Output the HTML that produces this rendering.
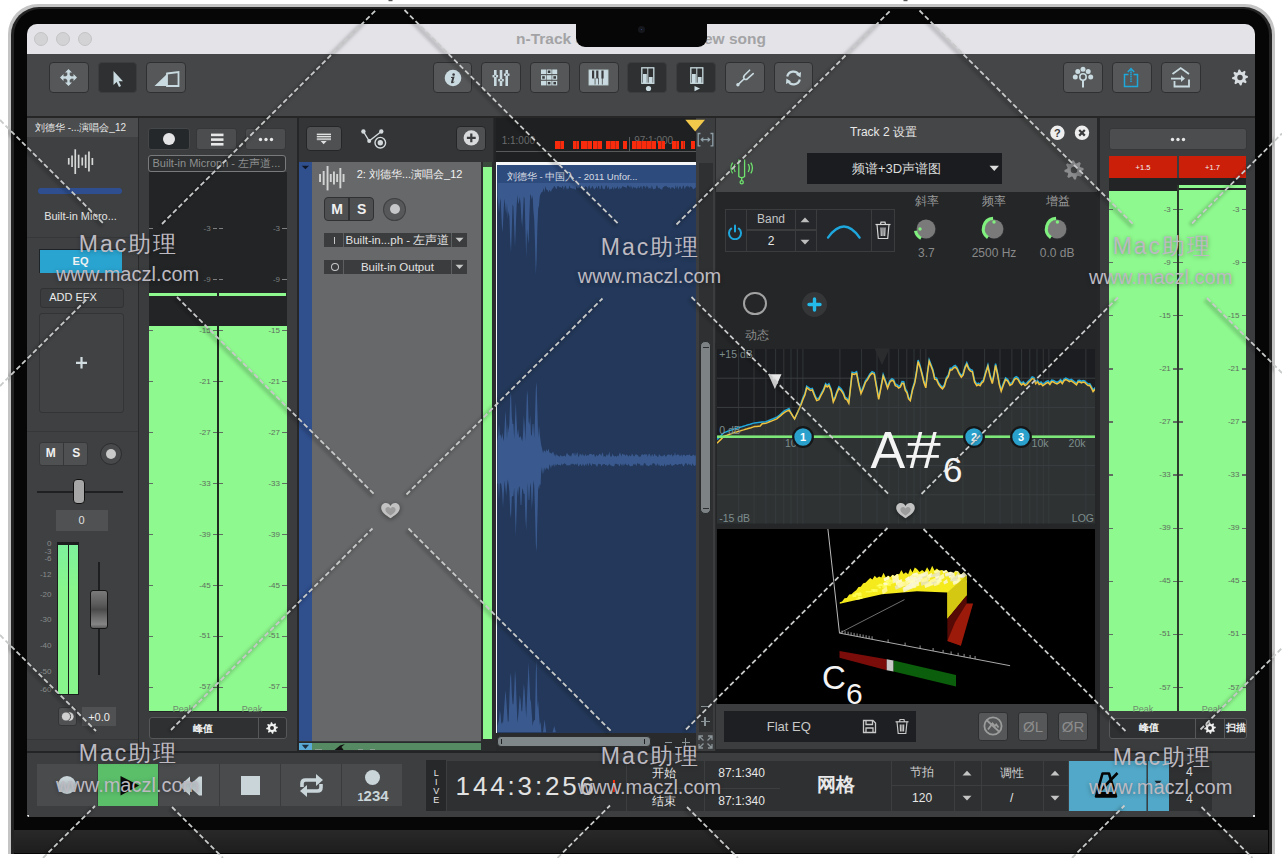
<!DOCTYPE html><html><head><meta charset="utf-8"><style>
*{margin:0;padding:0;box-sizing:border-box}
html,body{width:1282px;height:858px;overflow:hidden;background:#fff}
body{position:relative;font-family:"Liberation Sans",sans-serif}
div{position:absolute}
.t{white-space:nowrap;overflow:visible}
</style></head><body><div style="left:7.5px;top:4px;width:1267.2px;height:849.5px;background:#c4c4c4;border-radius:30px 30px 0 0;"></div>
<div style="left:10.5px;top:6.5px;width:1261.2px;height:847.0px;background:#242424;border-radius:28px 28px 0 0;"></div>
<div style="left:13.5px;top:8.5px;width:1255.0px;height:845.0px;background:#060606;border-radius:26px 26px 0 0;"></div>
<div style="left:14.4px;top:830.2px;width:1253.8999999999999px;height:23.0px;background:linear-gradient(#292929,#1d1d1d);"></div>
<div style="left:27px;top:24px;width:1228px;height:793px;background:#3d3e40;border-radius:10px 10px 3px 3px;overflow:hidden;"></div>
<div style="left:27px;top:24px;width:1228px;height:30px;background:#e4e3e8;border-radius:10px 10px 0 0;"></div>
<div style="left:34px;top:31.5px;width:14px;height:14.0px;background:#d3d3d5;border:1px solid #c4c4c6;border-radius:50%;"></div>
<div style="left:56px;top:31.5px;width:14px;height:14.0px;background:#d3d3d5;border:1px solid #c4c4c6;border-radius:50%;"></div>
<div style="left:78px;top:31.5px;width:14px;height:14.0px;background:#d3d3d5;border:1px solid #c4c4c6;border-radius:50%;"></div>
<div class="t" style="left:516.0px;top:22.8px;width:120px;height:31.0px;line-height:31.0px;font-size:15.5px;color:#a3a3a5;text-align:left;font-weight:bold;">n-Track S</div>
<div class="t" style="left:646.0px;top:22.8px;width:120px;height:31.0px;line-height:31.0px;font-size:15.5px;color:#a3a3a5;text-align:right;font-weight:bold;">ew song</div>
<div style="left:576px;top:20px;width:131px;height:27px;background:#060606;border-radius:0 0 9px 9px;"></div>
<div style="left:637.8px;top:25.8px;width:7.0px;height:6.9999999999999964px;background:#15171c;border-radius:50%;"></div>
<div style="left:640.6px;top:28.6px;width:1.3999999999999773px;height:1.3999999999999986px;background:#2a4a8a;border-radius:50%;"></div>
<div style="left:27px;top:54px;width:1228px;height:62px;background:#454648;"></div>
<div style="left:27px;top:116px;width:1228px;height:2px;background:#262626;"></div>
<div style="left:48.5px;top:62px;width:40.0px;height:30.5px;background:#565758;border:1px solid #2f3031;border-radius:4px;"></div>
<div style="left:97.5px;top:62px;width:39.5px;height:30.5px;background:#2f3031;border:1px solid #3c3d3e;border-radius:4px;"></div>
<div style="left:146px;top:62px;width:39.5px;height:30.5px;background:#565758;border:1px solid #2f3031;border-radius:4px;"></div>
<svg style="position:absolute;left:58px;top:67px;" width="21" height="21" viewBox="0 0 21 21"><g fill="#c9dbe0"><circle cx="10.5" cy="10.5" r="2.6"/><path d="M10.5 2 L14 5.5 L7 5.5Z M10.5 19 L14 15.5 L7 15.5Z M2 10.5 L5.5 7 L5.5 14Z M19 10.5 L15.5 7 L15.5 14Z"/><rect x="9.3" y="4" width="2.4" height="13"/><rect x="4" y="9.3" width="13" height="2.4"/></g></svg>
<svg style="position:absolute;left:110px;top:69px;" width="14" height="19" viewBox="0 0 14 19"><path d="M3.5 2 L3.5 16 L6.6 13 L9 18 L11 17 L8.7 12.2 L13 12.2Z" fill="#c9dbe0"/></svg>
<svg style="position:absolute;left:153px;top:70px;" width="28" height="18" viewBox="0 0 28 18"><path d="M1.5 16 L14 4 L14 16Z" fill="#c9dbe0"/><path d="M14 3.5 L25.5 2 L25.5 16 L14 16Z" fill="none" stroke="#c9dbe0" stroke-width="1.8"/></svg>
<div style="left:432.5px;top:62px;width:39.0px;height:30.5px;background:#565758;border:1px solid #2f3031;border-radius:4px;"></div>
<div style="left:481px;top:62px;width:39.5px;height:30.5px;background:#565758;border:1px solid #2f3031;border-radius:4px;"></div>
<div style="left:530px;top:62px;width:39.5px;height:30.5px;background:#565758;border:1px solid #2f3031;border-radius:4px;"></div>
<div style="left:579px;top:62px;width:39.5px;height:30.5px;background:#565758;border:1px solid #2f3031;border-radius:4px;"></div>
<div style="left:627px;top:62px;width:39.5px;height:30.5px;background:#2f3031;border:1px solid #3c3d3e;border-radius:4px;"></div>
<div style="left:676px;top:62px;width:39.5px;height:30.5px;background:#2f3031;border:1px solid #3c3d3e;border-radius:4px;"></div>
<div style="left:724.5px;top:62px;width:40.0px;height:30.5px;background:#565758;border:1px solid #2f3031;border-radius:4px;"></div>
<div style="left:773.5px;top:62px;width:39.5px;height:30.5px;background:#565758;border:1px solid #2f3031;border-radius:4px;"></div>
<svg style="position:absolute;left:444px;top:69px;" width="18" height="18" viewBox="0 0 18 18"><circle cx="9" cy="9" r="8.3" fill="#c9dbe0"/><path d="M9.6 4.2a1.3 1.3 0 1 0 .01 0Z" fill="#3a3b3c"/><path d="M7 8 L10.6 7.6 L9.2 12.6 Q9 13.4 10.3 12.6 L10.5 13 Q8.5 14.8 7.4 14.2 Q6.8 13.8 7.2 12.6 L8.2 9 L7 9Z" fill="#3a3b3c"/></svg>
<svg style="position:absolute;left:491px;top:68px;" width="20" height="20" viewBox="0 0 20 20"><g fill="#c9dbe0"><rect x="3" y="2" width="2.6" height="16"/><rect x="8.7" y="2" width="2.6" height="16"/><rect x="14.4" y="2" width="2.6" height="16"/><rect x="1.5" y="7" width="5.6" height="2.4"/><rect x="7.2" y="11" width="5.6" height="2.4"/><rect x="12.9" y="5.5" width="5.6" height="2.4"/></g><g fill="#565758"><rect x="3.6" y="7.4" width="1.4" height="1.6"/><rect x="9.3" y="11.4" width="1.4" height="1.6"/><rect x="15" y="5.9" width="1.4" height="1.6"/></g></svg>
<svg style="position:absolute;left:540px;top:69px;" width="18" height="18" viewBox="0 0 18 18"><g fill="#c9dbe0"><rect x="1" y="0.5" width="5" height="4.5"/><rect x="6.6" y="0.5" width="5" height="4.5"/><rect x="12.2" y="0.5" width="5" height="4.5"/><rect x="1" y="6.2" width="5" height="4.5"/><rect x="6.6" y="6.2" width="5" height="4.5"/><rect x="12.2" y="6.2" width="5" height="4.5"/><rect x="1" y="11.9" width="5" height="4.5"/><rect x="6.6" y="11.9" width="5" height="4.5"/><rect x="12.2" y="11.9" width="5" height="4.5"/></g><g fill="#3a3b3c"><rect x="7.8" y="1.5" width="2.6" height="2.5"/><rect x="2.2" y="7.2" width="2.6" height="2.5"/><rect x="13.4" y="7.2" width="2.6" height="2.5"/><rect x="7.8" y="12.9" width="2.6" height="2.5"/><rect x="13.4" y="12.9" width="2.6" height="2.5"/></g></svg>
<svg style="position:absolute;left:588px;top:69px;" width="21" height="17" viewBox="0 0 21 17"><rect x="0.8" y="0.8" width="19.4" height="15.4" fill="#c9dbe0" stroke="#9aa" stroke-width="0.6"/><g fill="#3a3b3c"><rect x="4" y="1.5" width="2.2" height="8"/><rect x="8.2" y="1.5" width="2.2" height="8"/><rect x="13.4" y="1.5" width="2.2" height="8"/><rect x="6.7" y="9" width="0.7" height="6.5"/><rect x="10.3" y="9" width="0.7" height="6.5"/><rect x="13.9" y="9" width="0.7" height="6.5"/></g></svg>
<svg style="position:absolute;left:641px;top:67px;" width="14" height="18" viewBox="0 0 14 18"><rect x="0.8" y="0.8" width="12" height="15.5" fill="#2f3031" stroke="#c9dbe0" stroke-width="1.3"/><line x1="6.8" y1="1" x2="6.8" y2="16" stroke="#c9dbe0" stroke-width="1"/><rect x="2" y="7" width="3.8" height="9" fill="#c9dbe0"/><rect x="7.8" y="10" width="3.8" height="6" fill="#c9dbe0"/></svg>
<svg style="position:absolute;left:645px;top:85px;" width="7" height="7" viewBox="0 0 7 7"><circle cx="3.5" cy="3.5" r="2.6" fill="#c9dbe0"/></svg>
<svg style="position:absolute;left:690px;top:67px;" width="14" height="18" viewBox="0 0 14 18"><rect x="0.8" y="0.8" width="12" height="15.5" fill="#2f3031" stroke="#c9dbe0" stroke-width="1.3"/><line x1="6.8" y1="1" x2="6.8" y2="16" stroke="#c9dbe0" stroke-width="1"/><rect x="2" y="7" width="3.8" height="9" fill="#c9dbe0"/><rect x="7.8" y="10" width="3.8" height="6" fill="#c9dbe0"/></svg>
<svg style="position:absolute;left:693px;top:85px;" width="8" height="7" viewBox="0 0 8 7"><path d="M1.5 1 L7 3.6 L1.5 6.2Z" fill="#c9dbe0"/></svg>
<svg style="position:absolute;left:735px;top:69px;" width="22" height="19" viewBox="0 0 22 19"><g fill="none" stroke="#c9dbe0" stroke-width="1.6" stroke-linecap="round"><path d="M3 15.6 L9 10"/><path d="M14.6 1.2 L9.5 6.2 Q7.8 8.3 9.3 9.8 Q10.9 11.3 12.6 9.6 L18.2 4.6"/></g><circle cx="2.9" cy="15.8" r="1.7" fill="#c9dbe0"/></svg>
<svg style="position:absolute;left:784px;top:69px;" width="19" height="18" viewBox="0 0 19 18"><g fill="none" stroke="#c9dbe0" stroke-width="2.2"><path d="M3.2 7.5 A6.3 6.3 0 0 1 15 6.2"/><path d="M15.8 10.5 A6.3 6.3 0 0 1 4 11.8"/></g><path d="M12 5.5 L17 3 L16.6 8.6Z M7 12.5 L2 15 L2.4 9.4Z" fill="#c9dbe0"/></svg>
<div style="left:1062.5px;top:62px;width:40.0px;height:30.5px;background:#565758;border:1px solid #2f3031;border-radius:4px;"></div>
<div style="left:1111.5px;top:62px;width:40.0px;height:30.5px;background:#565758;border:1px solid #2f3031;border-radius:4px;"></div>
<div style="left:1160.5px;top:62px;width:40.0px;height:30.5px;background:#565758;border:1px solid #2f3031;border-radius:4px;"></div>
<svg style="position:absolute;left:1072px;top:66px;" width="22" height="23" viewBox="0 0 22 23"><g fill="#c9dbe0"><circle cx="11" cy="3.2" r="2.5"/><circle cx="5.8" cy="5.5" r="2.5"/><circle cx="16.2" cy="5.5" r="2.5"/><circle cx="3.3" cy="11" r="2.5"/><circle cx="18.7" cy="11" r="2.5"/><rect x="10" y="14" width="2" height="7.5"/></g><circle cx="11" cy="11" r="3.2" fill="none" stroke="#c9dbe0" stroke-width="1.6"/></svg>
<svg style="position:absolute;left:1121px;top:66px;" width="20" height="23" viewBox="0 0 20 23"><g fill="none" stroke="#1ea7d9" stroke-width="1.5"><path d="M7.5 8.5 L3.5 8.5 L3.5 20.5 L16.5 20.5 L16.5 8.5 L12.5 8.5"/><path d="M10 16 L10 3" stroke-dasharray="1.6 0.6"/><path d="M6.8 6 L10 2.5 L13.2 6"/></g></svg>
<svg style="position:absolute;left:1169px;top:66px;" width="24" height="23" viewBox="0 0 24 23"><g fill="none" stroke="#c9dbe0" stroke-width="1.8"><path d="M3.5 8 L11.7 2 L20 8"/><path d="M5.5 15 L5.5 20.5 L20 20.5 L20 13.5"/><path d="M2 12.6 L14 12.6"/></g><path d="M12 9.2 L16 12.6 L12 16Z" fill="#c9dbe0"/></svg>
<svg style="position:absolute;left:1230px;top:67px;" width="20" height="21" viewBox="0 0 20 21"><polygon points="17.84,8.91 18.00,10.47 15.65,11.60 15.33,12.68 16.67,14.92 15.68,16.14 13.22,15.28 12.22,15.81 11.59,18.34 10.03,18.50 8.90,16.15 7.82,15.83 5.58,17.17 4.36,16.18 5.22,13.72 4.69,12.72 2.16,12.09 2.00,10.53 4.35,9.40 4.67,8.32 3.33,6.08 4.32,4.86 6.78,5.72 7.78,5.19 8.41,2.66 9.97,2.50 11.10,4.85 12.18,5.17 14.42,3.83 15.64,4.82 14.78,7.28 15.31,8.28" fill="#d7dde0"/><circle cx="10" cy="10.5" r="2.72" fill="#454648"/></svg>
<div style="left:27px;top:118px;width:1228px;height:634px;background:#292a2b;"></div>
<div style="left:27px;top:118px;width:110.5px;height:633px;background:#3e4041;"></div>
<div style="left:27px;top:118px;width:110.5px;height:19px;background:#4a4c4d;"></div>
<div class="t" style="left:25.5px;top:117.8px;width:110px;height:20px;line-height:20px;font-size:10px;color:#e6e6e6;text-align:center;font-weight:normal;">刘德华 -...演唱会_12</div>
<svg style="position:absolute;left:60px;top:145px;" width="40" height="35" viewBox="0 0 40 35"><g fill="#d6d8d8"><rect x="7.9" y="13" width="1.7" height="6.599999999999994"/><rect x="11.2" y="10.5" width="1.7" height="11.5"/><rect x="14.4" y="4.300000000000011" width="1.7" height="24.69999999999999"/><rect x="17.8" y="9.699999999999989" width="1.7" height="13.300000000000011"/><rect x="21.4" y="12.5" width="1.7" height="8.0"/><rect x="24.8" y="9.699999999999989" width="1.7" height="13.300000000000011"/><rect x="28.1" y="6.5" width="1.7" height="20.0"/><rect x="31.5" y="13" width="1.7" height="7"/></g></svg>
<div style="left:38.3px;top:187.8px;width:84.2px;height:6.399999999999977px;background:#2e4e90;border-radius:3px;"></div>
<div class="t" style="left:25.5px;top:204.5px;width:110px;height:22px;line-height:22px;font-size:11px;color:#e4e4e4;text-align:center;font-weight:normal;">Built-in Micro...</div>
<div style="left:27px;top:236.5px;width:110.5px;height:1.0px;background:#353738;"></div>
<div style="left:38.5px;top:249px;width:83.5px;height:24px;background:#29a4d0;border-top:1px solid #1d2326;border-left:1px solid #1d2326;"></div>
<div class="t" style="left:50.5px;top:249.8px;width:60px;height:22px;line-height:22px;font-size:11px;color:#f2f2f2;text-align:center;font-weight:bold;">EQ</div>
<div style="left:39.5px;top:287.5px;width:84.0px;height:20.0px;background:#3b3d3e;border:1px solid #303233;border-radius:3px;"></div>
<div class="t" style="left:33.0px;top:286.4px;width:80px;height:22px;line-height:22px;font-size:11px;color:#ececec;text-align:center;font-weight:normal;">ADD EFX</div>
<div style="left:39px;top:313px;width:85px;height:99.5px;background:#404243;border:1px solid #323435;border-radius:3px;"></div>
<svg style="position:absolute;left:75px;top:356px;" width="13" height="14" viewBox="0 0 13 14"><path d="M6.5 1 V12.5 M1 6.8 H12" stroke="#d2dde2" stroke-width="2.2"/></svg>
<div style="left:27px;top:430.5px;width:110.5px;height:1.0px;background:#353738;"></div>
<div style="left:38.8px;top:441.8px;width:49.5px;height:23.80000000000001px;background:#4e5051;border:1px solid #353738;border-radius:3px;"></div>
<div style="left:63px;top:442px;width:1.2000000000000028px;height:23px;background:#353738;"></div>
<div class="t" style="left:40.8px;top:441.0px;width:20px;height:24px;line-height:24px;font-size:12px;color:#f0f0f0;text-align:center;font-weight:bold;">M</div>
<div class="t" style="left:66.3px;top:441.0px;width:20px;height:24px;line-height:24px;font-size:12px;color:#f0f0f0;text-align:center;font-weight:bold;">S</div>
<div style="left:99.7px;top:442.8px;width:22.599999999999994px;height:22.599999999999966px;background:#47494a;border:1.5px solid #2b2d2e;border-radius:50%;"></div>
<div style="left:106px;top:449px;width:10px;height:10px;background:#c9c9c9;border-radius:50%;"></div>
<div style="left:37px;top:491.2px;width:86px;height:1.8000000000000114px;background:#1f2021;"></div>
<div style="left:73.2px;top:479.4px;width:12.099999999999994px;height:25.0px;background:#a6a6a6;border:1.5px solid #101010;border-radius:4px;"></div>
<div style="left:55.5px;top:509.7px;width:52.0px;height:20.900000000000034px;background:#505152;"></div>
<div class="t" style="left:66.5px;top:509.2px;width:30px;height:22px;line-height:22px;font-size:11px;color:#e0e0e0;text-align:center;font-weight:normal;">0</div>
<div style="left:57px;top:542px;width:21.599999999999994px;height:152.5px;background:#1c1d1e;"></div>
<div style="left:57.8px;top:545px;width:10.0px;height:149px;background:linear-gradient(#7ef29c,#88f58c 30%,#88f58c);"></div>
<div style="left:69px;top:545px;width:9px;height:149px;background:linear-gradient(#7ef29c,#88f58c 30%,#88f58c);"></div>
<div class="t" style="left:21.5px;top:535.7px;width:30px;height:16px;line-height:16px;font-size:8px;color:#8a8c8d;text-align:right;font-weight:normal;">0</div>
<div class="t" style="left:21.5px;top:543.7px;width:30px;height:16px;line-height:16px;font-size:8px;color:#8a8c8d;text-align:right;font-weight:normal;">-3</div>
<div class="t" style="left:21.5px;top:551.4px;width:30px;height:16px;line-height:16px;font-size:8px;color:#8a8c8d;text-align:right;font-weight:normal;">-6</div>
<div class="t" style="left:21.5px;top:567.4px;width:30px;height:16px;line-height:16px;font-size:8px;color:#8a8c8d;text-align:right;font-weight:normal;">-12</div>
<div class="t" style="left:21.5px;top:586.9px;width:30px;height:16px;line-height:16px;font-size:8px;color:#8a8c8d;text-align:right;font-weight:normal;">-20</div>
<div class="t" style="left:21.5px;top:612.3px;width:30px;height:16px;line-height:16px;font-size:8px;color:#8a8c8d;text-align:right;font-weight:normal;">-30</div>
<div class="t" style="left:21.5px;top:637.9px;width:30px;height:16px;line-height:16px;font-size:8px;color:#8a8c8d;text-align:right;font-weight:normal;">-40</div>
<div class="t" style="left:21.5px;top:663.5px;width:30px;height:16px;line-height:16px;font-size:8px;color:#8a8c8d;text-align:right;font-weight:normal;">-50</div>
<div class="t" style="left:21.5px;top:682.0px;width:30px;height:16px;line-height:16px;font-size:8px;color:#8a8c8d;text-align:right;font-weight:normal;">-60</div>
<div style="left:97.8px;top:562px;width:2.0px;height:112.70000000000005px;background:#1d1e1f;"></div>
<div style="left:90.2px;top:590.1px;width:18.200000000000003px;height:39.10000000000002px;background:linear-gradient(#7a7a7a,#5c5c5c 35%,#4a4a4a 50%,#6a6a6a 70%,#858585 90%,#5a5a5a);border:1.5px solid #151515;border-radius:3px;"></div>
<div style="left:58px;top:707px;width:19px;height:19.399999999999977px;background:#505152;border:1px solid #333536;border-radius:3px;"></div>
<svg style="position:absolute;left:60px;top:709px;" width="15" height="15" viewBox="0 0 15 15"><circle cx="9.5" cy="7.5" r="4.2" fill="#d8d8d8"/><circle cx="6" cy="7.5" r="4.6" fill="#d0d0d0" stroke="#505152" stroke-width="1"/></svg>
<div style="left:82px;top:707px;width:33.8px;height:19.399999999999977px;background:#505152;"></div>
<div class="t" style="left:79.0px;top:705.8px;width:40px;height:22px;line-height:22px;font-size:11px;color:#eeeeee;text-align:center;font-weight:normal;">+0.0</div>
<div style="left:27px;top:739px;width:110.5px;height:1px;background:#343637;"></div>
<div style="left:27px;top:740px;width:110.5px;height:11px;background:#3b3d3e;"></div>
<div style="left:139.2px;top:118px;width:157.8px;height:633px;background:#3a3c3d;"></div>
<div style="left:148.1px;top:127.8px;width:42.20000000000002px;height:22.60000000000001px;background:#25282a;border:1px solid #444647;border-radius:3px;"></div>
<div style="left:163.3px;top:133.2px;width:11.799999999999983px;height:11.800000000000011px;background:#e4e4e6;border-radius:50%;"></div>
<div style="left:196.1px;top:127.8px;width:41.400000000000006px;height:22.60000000000001px;background:#4b4d4e;border:1px solid #353738;border-radius:3px;"></div>
<svg style="position:absolute;left:210px;top:133px;" width="15" height="13" viewBox="0 0 15 13"><g fill="#e8e8e8"><rect x="1" y="0.6" width="12.5" height="2.6"/><rect x="1" y="5.3" width="12.5" height="2.6"/><rect x="1" y="10" width="12.5" height="2.6"/></g></svg>
<div style="left:245.3px;top:127.8px;width:41.0px;height:22.60000000000001px;background:#4b4d4e;border:1px solid #353738;border-radius:3px;"></div>
<svg style="position:absolute;left:256px;top:136px;" width="20" height="7" viewBox="0 0 20 7"><g fill="#e8e8e8"><circle cx="4.5" cy="3.5" r="1.7"/><circle cx="10" cy="3.5" r="1.7"/><circle cx="15.5" cy="3.5" r="1.7"/></g></svg>
<div style="left:147.8px;top:155.3px;width:138.7px;height:16.299999999999983px;background:#2e3031;border:1.5px solid #787a7b;border-radius:3px;"></div>
<div class="t" style="left:152.5px;top:152.4px;width:140px;height:22px;line-height:22px;font-size:11px;color:#8d8f90;text-align:left;font-weight:normal;overflow:hidden;width:132px;">Built-in Micropn - 左声道...</div>
<div style="left:148.5px;top:172px;width:138.0px;height:539.5px;background:#222425;"></div>
<div style="left:148.5px;top:325.6px;width:138.0px;height:385.9px;background:#8ef98e;"></div>
<div style="left:217.2px;top:325.6px;width:1.6000000000000227px;height:385.9px;background:#1f2a20;"></div>
<div style="left:148.5px;top:228.10000000000002px;width:4.5px;height:1.3999999999999773px;background:#7d7f80;"></div>
<div style="left:212.7px;top:228.10000000000002px;width:4.5px;height:1.3999999999999773px;background:#7d7f80;"></div>
<div class="t" style="left:180.7px;top:220.8px;width:30px;height:16px;line-height:16px;font-size:8px;color:#7d7f80;text-align:right;font-weight:normal;">-3</div>
<div style="left:218.8px;top:228.10000000000002px;width:4.5px;height:1.3999999999999773px;background:#7d7f80;"></div>
<div style="left:282.0px;top:228.10000000000002px;width:4.5px;height:1.3999999999999773px;background:#7d7f80;"></div>
<div class="t" style="left:250.0px;top:220.8px;width:30px;height:16px;line-height:16px;font-size:8px;color:#7d7f80;text-align:right;font-weight:normal;">-3</div>
<div style="left:148.5px;top:279.05px;width:4.5px;height:1.3999999999999773px;background:#7d7f80;"></div>
<div style="left:212.7px;top:279.05px;width:4.5px;height:1.3999999999999773px;background:#7d7f80;"></div>
<div class="t" style="left:180.7px;top:271.8px;width:30px;height:16px;line-height:16px;font-size:8px;color:#7d7f80;text-align:right;font-weight:normal;">-9</div>
<div style="left:218.8px;top:279.05px;width:4.5px;height:1.3999999999999773px;background:#7d7f80;"></div>
<div style="left:282.0px;top:279.05px;width:4.5px;height:1.3999999999999773px;background:#7d7f80;"></div>
<div class="t" style="left:250.0px;top:271.8px;width:30px;height:16px;line-height:16px;font-size:8px;color:#7d7f80;text-align:right;font-weight:normal;">-9</div>
<div style="left:148.5px;top:330.00000000000006px;width:4.5px;height:1.3999999999999773px;background:#5f6e60;"></div>
<div style="left:212.7px;top:330.00000000000006px;width:4.5px;height:1.3999999999999773px;background:#5f6e60;"></div>
<div class="t" style="left:180.7px;top:322.7px;width:30px;height:16px;line-height:16px;font-size:8px;color:#5f6e60;text-align:right;font-weight:normal;">-15</div>
<div style="left:218.8px;top:330.00000000000006px;width:4.5px;height:1.3999999999999773px;background:#5f6e60;"></div>
<div style="left:282.0px;top:330.00000000000006px;width:4.5px;height:1.3999999999999773px;background:#5f6e60;"></div>
<div class="t" style="left:250.0px;top:322.7px;width:30px;height:16px;line-height:16px;font-size:8px;color:#5f6e60;text-align:right;font-weight:normal;">-15</div>
<div style="left:148.5px;top:380.95000000000005px;width:4.5px;height:1.3999999999999773px;background:#5f6e60;"></div>
<div style="left:212.7px;top:380.95000000000005px;width:4.5px;height:1.3999999999999773px;background:#5f6e60;"></div>
<div class="t" style="left:180.7px;top:373.7px;width:30px;height:16px;line-height:16px;font-size:8px;color:#5f6e60;text-align:right;font-weight:normal;">-21</div>
<div style="left:218.8px;top:380.95000000000005px;width:4.5px;height:1.3999999999999773px;background:#5f6e60;"></div>
<div style="left:282.0px;top:380.95000000000005px;width:4.5px;height:1.3999999999999773px;background:#5f6e60;"></div>
<div class="t" style="left:250.0px;top:373.7px;width:30px;height:16px;line-height:16px;font-size:8px;color:#5f6e60;text-align:right;font-weight:normal;">-21</div>
<div style="left:148.5px;top:431.90000000000003px;width:4.5px;height:1.3999999999999773px;background:#5f6e60;"></div>
<div style="left:212.7px;top:431.90000000000003px;width:4.5px;height:1.3999999999999773px;background:#5f6e60;"></div>
<div class="t" style="left:180.7px;top:424.6px;width:30px;height:16px;line-height:16px;font-size:8px;color:#5f6e60;text-align:right;font-weight:normal;">-27</div>
<div style="left:218.8px;top:431.90000000000003px;width:4.5px;height:1.3999999999999773px;background:#5f6e60;"></div>
<div style="left:282.0px;top:431.90000000000003px;width:4.5px;height:1.3999999999999773px;background:#5f6e60;"></div>
<div class="t" style="left:250.0px;top:424.6px;width:30px;height:16px;line-height:16px;font-size:8px;color:#5f6e60;text-align:right;font-weight:normal;">-27</div>
<div style="left:148.5px;top:482.85px;width:4.5px;height:1.3999999999999773px;background:#5f6e60;"></div>
<div style="left:212.7px;top:482.85px;width:4.5px;height:1.3999999999999773px;background:#5f6e60;"></div>
<div class="t" style="left:180.7px;top:475.6px;width:30px;height:16px;line-height:16px;font-size:8px;color:#5f6e60;text-align:right;font-weight:normal;">-33</div>
<div style="left:218.8px;top:482.85px;width:4.5px;height:1.3999999999999773px;background:#5f6e60;"></div>
<div style="left:282.0px;top:482.85px;width:4.5px;height:1.3999999999999773px;background:#5f6e60;"></div>
<div class="t" style="left:250.0px;top:475.6px;width:30px;height:16px;line-height:16px;font-size:8px;color:#5f6e60;text-align:right;font-weight:normal;">-33</div>
<div style="left:148.5px;top:533.8px;width:4.5px;height:1.400000000000091px;background:#5f6e60;"></div>
<div style="left:212.7px;top:533.8px;width:4.5px;height:1.400000000000091px;background:#5f6e60;"></div>
<div class="t" style="left:180.7px;top:526.5px;width:30px;height:16px;line-height:16px;font-size:8px;color:#5f6e60;text-align:right;font-weight:normal;">-39</div>
<div style="left:218.8px;top:533.8px;width:4.5px;height:1.400000000000091px;background:#5f6e60;"></div>
<div style="left:282.0px;top:533.8px;width:4.5px;height:1.400000000000091px;background:#5f6e60;"></div>
<div class="t" style="left:250.0px;top:526.5px;width:30px;height:16px;line-height:16px;font-size:8px;color:#5f6e60;text-align:right;font-weight:normal;">-39</div>
<div style="left:148.5px;top:584.75px;width:4.5px;height:1.400000000000091px;background:#5f6e60;"></div>
<div style="left:212.7px;top:584.75px;width:4.5px;height:1.400000000000091px;background:#5f6e60;"></div>
<div class="t" style="left:180.7px;top:577.5px;width:30px;height:16px;line-height:16px;font-size:8px;color:#5f6e60;text-align:right;font-weight:normal;">-45</div>
<div style="left:218.8px;top:584.75px;width:4.5px;height:1.400000000000091px;background:#5f6e60;"></div>
<div style="left:282.0px;top:584.75px;width:4.5px;height:1.400000000000091px;background:#5f6e60;"></div>
<div class="t" style="left:250.0px;top:577.5px;width:30px;height:16px;line-height:16px;font-size:8px;color:#5f6e60;text-align:right;font-weight:normal;">-45</div>
<div style="left:148.5px;top:635.7px;width:4.5px;height:1.400000000000091px;background:#5f6e60;"></div>
<div style="left:212.7px;top:635.7px;width:4.5px;height:1.400000000000091px;background:#5f6e60;"></div>
<div class="t" style="left:180.7px;top:628.4px;width:30px;height:16px;line-height:16px;font-size:8px;color:#5f6e60;text-align:right;font-weight:normal;">-51</div>
<div style="left:218.8px;top:635.7px;width:4.5px;height:1.400000000000091px;background:#5f6e60;"></div>
<div style="left:282.0px;top:635.7px;width:4.5px;height:1.400000000000091px;background:#5f6e60;"></div>
<div class="t" style="left:250.0px;top:628.4px;width:30px;height:16px;line-height:16px;font-size:8px;color:#5f6e60;text-align:right;font-weight:normal;">-51</div>
<div style="left:148.5px;top:686.65px;width:4.5px;height:1.400000000000091px;background:#5f6e60;"></div>
<div style="left:212.7px;top:686.65px;width:4.5px;height:1.400000000000091px;background:#5f6e60;"></div>
<div class="t" style="left:180.7px;top:679.4px;width:30px;height:16px;line-height:16px;font-size:8px;color:#5f6e60;text-align:right;font-weight:normal;">-57</div>
<div style="left:218.8px;top:686.65px;width:4.5px;height:1.400000000000091px;background:#5f6e60;"></div>
<div style="left:282.0px;top:686.65px;width:4.5px;height:1.400000000000091px;background:#5f6e60;"></div>
<div class="t" style="left:250.0px;top:679.4px;width:30px;height:16px;line-height:16px;font-size:8px;color:#5f6e60;text-align:right;font-weight:normal;">-57</div>
<div style="left:148.5px;top:293.3px;width:68.69999999999999px;height:2.599999999999966px;background:#8ef98e;"></div>
<div style="left:218.8px;top:293.3px;width:67.69999999999999px;height:2.599999999999966px;background:#8ef98e;"></div>
<div class="t" style="left:163.0px;top:699.5px;width:40px;height:18px;line-height:18px;font-size:9px;color:#6f8a70;text-align:center;font-weight:normal;">Peak</div>
<div class="t" style="left:232.0px;top:699.5px;width:40px;height:18px;line-height:18px;font-size:9px;color:#6f8a70;text-align:center;font-weight:normal;">Peak</div>
<div style="left:148.5px;top:717.4px;width:138.0px;height:22.100000000000023px;background:#2e3031;border:1px solid #555758;border-radius:3px;"></div>
<div style="left:258px;top:717.4px;width:1.1999999999999886px;height:22.100000000000023px;background:#555758;"></div>
<div class="t" style="left:173.0px;top:718.5px;width:60px;height:20px;line-height:20px;font-size:10px;color:#f0f0f0;text-align:center;font-weight:bold;">峰值</div>
<svg style="position:absolute;left:265px;top:721px;" width="14" height="14" viewBox="0 0 14 14"><polygon points="12.68,5.85 12.80,6.98 11.10,7.80 10.86,8.58 11.83,10.20 11.12,11.09 9.33,10.46 8.61,10.85 8.15,12.68 7.02,12.80 6.20,11.10 5.42,10.86 3.80,11.83 2.91,11.12 3.54,9.33 3.15,8.61 1.32,8.15 1.20,7.02 2.90,6.20 3.14,5.42 2.17,3.80 2.88,2.91 4.67,3.54 5.39,3.15 5.85,1.32 6.98,1.20 7.80,2.90 8.58,3.14 10.20,2.17 11.09,2.88 10.46,4.67 10.85,5.39" fill="#f0f0f0"/><circle cx="7" cy="7" r="1.97" fill="#2e3031"/></svg>
<div style="left:297px;top:118px;width:2.3999999999999773px;height:633px;background:#252627;"></div>
<div style="left:299.4px;top:118px;width:194.10000000000002px;height:43.599999999999994px;background:#333537;"></div>
<div style="left:305.7px;top:125.9px;width:36.19999999999999px;height:25.299999999999983px;background:#4e5051;border:1.5px solid #252627;border-radius:4px;"></div>
<svg style="position:absolute;left:315px;top:131px;" width="19" height="18" viewBox="0 0 19 18"><g fill="#e0e2e2"><rect x="1.8" y="2.6" width="14.2" height="1.5"/><rect x="1.8" y="4.9" width="14.2" height="1.5"/><rect x="1.8" y="7.2" width="14.2" height="2" fill="#bfc1c1"/><path d="M5.6 10 L11.7 10 L8.65 13.2Z"/></g></svg>
<svg style="position:absolute;left:358px;top:126px;" width="32" height="24" viewBox="0 0 32 24"><g stroke="#d4dadc" stroke-width="1.4" fill="none"><path d="M5.4 5.5 L11.2 15 L23.3 5.5"/><circle cx="22.3" cy="16.7" r="5.3"/></g><g fill="#d4dadc"><circle cx="5.4" cy="5.5" r="2.2"/><circle cx="23.3" cy="5.5" r="2.2"/><circle cx="11.2" cy="15" r="2"/><circle cx="22.3" cy="16.7" r="2.7"/></g></svg>
<div style="left:456px;top:125.9px;width:29.69999999999999px;height:25.299999999999983px;background:#4e5051;border:1.5px solid #252627;border-radius:4px;"></div>
<svg style="position:absolute;left:463px;top:130px;" width="17" height="16" viewBox="0 0 17 16"><circle cx="8.3" cy="7.9" r="7.7" fill="#d8dadb"/><path d="M7.2 3.5 h2.2 v3.3 h3.3 v2.2 h-3.3 v3.3 h-2.2 v-3.3 h-3.3 v-2.2 h3.3z" fill="#3a3c3d"/></svg>
<div style="left:493.5px;top:118px;width:2.5px;height:633px;background:#232425;"></div>
<div style="left:299.4px;top:161.6px;width:181.8px;height:579.0px;background:#676869;"></div>
<div style="left:299.4px;top:161.6px;width:12.400000000000034px;height:579.0px;background:#2f4f8d;"></div>
<svg style="position:absolute;left:301px;top:165px;" width="9" height="5" viewBox="0 0 9 5"><path d="M0.8 0.7 L8 0.7 L4.4 4.3Z" fill="#101828"/></svg>
<div style="left:481.2px;top:161.6px;width:14.800000000000011px;height:589.4px;background:#2a2c2d;"></div>
<div style="left:482.9px;top:162.2px;width:9.200000000000045px;height:577.3px;background:#8ef98e;"></div>
<div style="left:482.9px;top:162.2px;width:9.200000000000045px;height:4.5px;background:#3a4a3d;"></div>
<svg style="position:absolute;left:318px;top:164px;" width="30" height="29" viewBox="0 0 30 29"><g fill="#d2d4d4"><rect x="1.1" y="10" width="1.9" height="8"/><rect x="4.7" y="7" width="1.9" height="14"/><rect x="8.6" y="2" width="1.9" height="24.400000000000006"/><rect x="11.8" y="10" width="1.9" height="8"/><rect x="15.0" y="7.5" width="1.9" height="13.0"/><rect x="18.2" y="10" width="1.9" height="8"/><rect x="21.4" y="4" width="1.9" height="20.30000000000001"/><rect x="24.6" y="10" width="1.9" height="8"/></g></svg>
<div class="t" style="left:356.7px;top:162.8px;width:120px;height:22px;line-height:22px;font-size:11px;color:#f2f2f2;text-align:left;font-weight:normal;">2: 刘德华...演唱会_12</div>
<div style="left:324.3px;top:196.5px;width:50.0px;height:24.69999999999999px;background:#4d4f50;border:1.5px solid #2f3132;border-radius:4px;"></div>
<div style="left:348.4px;top:197px;width:1.400000000000034px;height:24px;background:#2f3132;"></div>
<div class="t" style="left:327.0px;top:194.8px;width:20px;height:28px;line-height:28px;font-size:14px;color:#f0f0f0;text-align:center;font-weight:bold;">M</div>
<div class="t" style="left:351.6px;top:194.8px;width:20px;height:28px;line-height:28px;font-size:14px;color:#f0f0f0;text-align:center;font-weight:bold;">S</div>
<div style="left:383px;top:197.5px;width:23.399999999999977px;height:23.599999999999994px;background:#565859;border:1.5px solid #3f4142;border-radius:50%;"></div>
<div style="left:389.6px;top:204.2px;width:10.199999999999989px;height:10.200000000000017px;background:#c6c7c8;border-radius:50%;"></div>
<div style="left:324.2px;top:233.1px;width:142.60000000000002px;height:14.400000000000006px;background:#3a3c3d;"></div>
<div style="left:343.4px;top:233.1px;width:1.0px;height:14.400000000000006px;background:#5d5f60;"></div>
<div style="left:451px;top:233.1px;width:1px;height:14.400000000000006px;background:#5d5f60;"></div>
<div style="left:334.1px;top:236.8px;width:1.099999999999966px;height:7.0px;background:#c8c8c8;"></div>
<div class="t" style="left:342.4px;top:228.8px;width:110px;height:23.0px;line-height:23.0px;font-size:11.5px;color:#e2e2e2;text-align:center;font-weight:normal;">Built-in...ph - 左声道</div>
<svg style="position:absolute;left:455px;top:237.3px;" width="9" height="6.0" viewBox="0 0 9 6.0"><path d="M0.5 0.8 L8.5 0.8 L4.5 5Z" fill="#c6c8c8"/></svg>
<div style="left:324.2px;top:260.2px;width:142.60000000000002px;height:13.699999999999989px;background:#3a3c3d;"></div>
<div style="left:343.4px;top:260.2px;width:1.0px;height:13.699999999999989px;background:#5d5f60;"></div>
<div style="left:451px;top:260.2px;width:1px;height:13.699999999999989px;background:#5d5f60;"></div>
<div style="left:330.8px;top:263.04999999999995px;width:8.199999999999989px;height:8.0px;border:1.1px solid #c8c8c8;border-radius:50%;"></div>
<div class="t" style="left:342.4px;top:255.5px;width:110px;height:23.0px;line-height:23.0px;font-size:11.5px;color:#e2e2e2;text-align:center;font-weight:normal;">Built-in Output</div>
<svg style="position:absolute;left:455px;top:264.04999999999995px;" width="9" height="6.0" viewBox="0 0 9 6.0"><path d="M0.5 0.8 L8.5 0.8 L4.5 5Z" fill="#c6c8c8"/></svg>
<div style="left:299.4px;top:740.6px;width:181.8px;height:1.8999999999999773px;background:#353738;"></div>
<div style="left:299.4px;top:742.5px;width:181.8px;height:7.7999999999999545px;background:#558a62;"></div>
<div style="left:299.4px;top:742.5px;width:12.400000000000034px;height:7.7999999999999545px;background:#5aaad8;"></div>
<svg style="position:absolute;left:301px;top:744px;" width="9" height="6" viewBox="0 0 9 6"><path d="M0.8 0.7 L8 0.7 L4.4 5Z" fill="#1e3040"/></svg>
<svg style="position:absolute;left:333px;top:742.5px;" width="13" height="7.7999999999999545" viewBox="0 0 13 7.7999999999999545"><path d="M1 7.5 L7 2.5 L12 1 L8.5 4 L11 7.5Z" fill="#111"/></svg>
<div style="left:314.5px;top:748.8px;width:7.5px;height:1.0px;background:#8aa090;"></div>
<div style="left:357.5px;top:748.8px;width:5.5px;height:1.0px;background:#8aa090;"></div>
<div style="left:370px;top:748.8px;width:5px;height:1.0px;background:#8aa090;"></div>
<div style="left:496px;top:118px;width:200px;height:44px;background:#1f2021;"></div>
<div class="t" style="left:501.7px;top:130.9px;width:60px;height:20px;line-height:20px;font-size:10px;color:#6a6c6d;text-align:left;font-weight:normal;">1:1:000</div>
<div class="t" style="left:634.2px;top:130.5px;width:60px;height:20px;line-height:20px;font-size:10px;color:#6a6c6d;text-align:left;font-weight:normal;">97:1:000</div>
<div style="left:555.3px;top:140.5px;width:9.0px;height:8.699999999999989px;background:#fa2a0c;"></div>
<div style="left:573.2px;top:140.5px;width:6.199999999999932px;height:8.699999999999989px;background:#fa2a0c;"></div>
<div style="left:581.2px;top:140.5px;width:11.0px;height:8.699999999999989px;background:#fa2a0c;"></div>
<div style="left:593.1px;top:140.5px;width:8.600000000000023px;height:8.699999999999989px;background:#fa2a0c;"></div>
<div style="left:606.4px;top:140.5px;width:12.300000000000068px;height:8.699999999999989px;background:#fa2a0c;"></div>
<div style="left:623px;top:140.5px;width:4px;height:8.699999999999989px;background:#fa2a0c;"></div>
<div style="left:631.6px;top:140.5px;width:24.5px;height:8.699999999999989px;background:#fa2a0c;"></div>
<div style="left:657.7px;top:140.5px;width:7.399999999999977px;height:8.699999999999989px;background:#fa2a0c;"></div>
<div style="left:672px;top:140.5px;width:7.2999999999999545px;height:8.699999999999989px;background:#fa2a0c;"></div>
<div style="left:681px;top:140.5px;width:4.2999999999999545px;height:8.699999999999989px;background:#fa2a0c;"></div>
<div style="left:690.6px;top:140.5px;width:4.600000000000023px;height:8.699999999999989px;background:#fa2a0c;"></div>
<div style="left:560px;top:140.5px;width:0.7999999999999545px;height:8.699999999999989px;background:#8a2a1a;opacity:.6;"></div>
<div style="left:576.3px;top:140.5px;width:0.7999999999999545px;height:8.699999999999989px;background:#8a2a1a;opacity:.6;"></div>
<div style="left:586.5px;top:140.5px;width:0.7999999999999545px;height:8.699999999999989px;background:#8a2a1a;opacity:.6;"></div>
<div style="left:596.5px;top:140.5px;width:0.7999999999999545px;height:8.699999999999989px;background:#8a2a1a;opacity:.6;"></div>
<div style="left:610px;top:140.5px;width:0.7999999999999545px;height:8.699999999999989px;background:#8a2a1a;opacity:.6;"></div>
<div style="left:614.5px;top:140.5px;width:0.7999999999999545px;height:8.699999999999989px;background:#8a2a1a;opacity:.6;"></div>
<div style="left:636px;top:140.5px;width:0.7999999999999545px;height:8.699999999999989px;background:#8a2a1a;opacity:.6;"></div>
<div style="left:641px;top:140.5px;width:0.7999999999999545px;height:8.699999999999989px;background:#8a2a1a;opacity:.6;"></div>
<div style="left:646px;top:140.5px;width:0.7999999999999545px;height:8.699999999999989px;background:#8a2a1a;opacity:.6;"></div>
<div style="left:651px;top:140.5px;width:0.7999999999999545px;height:8.699999999999989px;background:#8a2a1a;opacity:.6;"></div>
<div style="left:661px;top:140.5px;width:0.7999999999999545px;height:8.699999999999989px;background:#8a2a1a;opacity:.6;"></div>
<div style="left:676px;top:140.5px;width:0.7999999999999545px;height:8.699999999999989px;background:#8a2a1a;opacity:.6;"></div>
<div style="left:683px;top:140.5px;width:0.7999999999999545px;height:8.699999999999989px;background:#8a2a1a;opacity:.6;"></div>
<div style="left:629px;top:136.6px;width:1.2000000000000455px;height:14.5px;background:#5a5c5d;"></div>
<div style="left:496px;top:150.5px;width:200px;height:1.8000000000000114px;background:#57595a;"></div>
<div style="left:696px;top:118px;width:18.799999999999955px;height:633px;background:#3b3d3e;"></div>
<div style="left:699px;top:163px;width:13.5px;height:569px;background:#2e3032;"></div>
<svg style="position:absolute;left:685px;top:119px;" width="21" height="13" viewBox="0 0 21 13"><path d="M0.3 0.7 L20 0.7 L10.2 12.5Z" fill="#f3c94c"/></svg>
<svg style="position:absolute;left:697px;top:132px;" width="17" height="16" viewBox="0 0 17 16"><g fill="none" stroke="#8fa0a8" stroke-width="1.3"><path d="M3.5 1.5 L1.2 1.5 L1.2 13.8 L3.5 13.8"/><path d="M13.5 1.5 L15.8 1.5 L15.8 13.8 L13.5 13.8"/><path d="M4 7.6 L13 7.6"/></g><path d="M3.3 7.6 L6.3 5 L6.3 10.2Z M13.7 7.6 L10.7 5 L10.7 10.2Z" fill="#8fa0a8"/></svg>
<div style="left:699.8px;top:341px;width:11.200000000000045px;height:173.39999999999998px;background:#7d8385;border:1px solid #2a2c2d;border-radius:5px;"></div>
<div style="left:702.5px;top:346.5px;width:6.0px;height:1.5px;background:#2c2e2f;"></div>
<div style="left:702.5px;top:507.5px;width:6.0px;height:1.5px;background:#2c2e2f;"></div>
<div style="left:496px;top:162px;width:200px;height:570.6px;background:#23385a;"></div>
<div style="left:496px;top:162px;width:200px;height:2.8000000000000114px;background:#f4f6f8;"></div>
<div style="left:496px;top:162px;width:1.3999999999999773px;height:570.6px;background:#f4f6f8;"></div>
<div style="left:497.4px;top:164.8px;width:198.60000000000002px;height:18.599999999999994px;background:#2e4b7d;"></div>
<div class="t" style="left:506.9px;top:166.7px;width:150px;height:19.0px;line-height:19.0px;font-size:9.5px;color:#d6dbe3;text-align:left;font-weight:normal;">刘德华 - 中国入 - 2011 Unfor...</div>
<svg style="position:absolute;left:496px;top:183.4px;" width="200" height="549.2" viewBox="0 0 200 549.2"><g fill="#3a5a8f"><polygon points="1.4,0.0 2.2,0.0 3.0,0.0 3.8,0.0 4.6,0.0 5.4,0.0 6.2,0.0 7.0,0.0 7.8,0.0 8.6,0.0 9.4,0.0 10.2,0.0 11.0,0.0 11.8,0.0 12.6,0.0 13.4,0.0 14.2,0.0 15.0,0.0 15.8,0.0 16.6,0.0 17.4,0.0 18.2,0.0 19.0,0.0 19.8,0.0 20.6,0.0 21.4,0.0 22.2,0.0 23.0,0.0 23.8,0.0 24.6,0.0 25.4,0.0 26.2,0.0 27.0,0.0 27.8,0.0 28.6,0.0 29.4,0.0 30.2,0.0 31.0,0.0 31.8,0.0 32.6,0.0 33.4,0.0 34.2,0.0 35.0,0.0 35.8,0.0 36.6,0.0 37.4,0.0 38.2,0.0 39.0,0.0 39.8,0.0 40.6,0.0 41.4,0.0 42.2,0.0 43.0,0.0 43.8,0.0 44.6,0.0 45.4,0.0 46.2,0.0 47.0,0.0 47.8,0.0 48.6,0.0 49.4,0.0 50.2,0.0 51.0,0.0 51.8,0.0 52.6,0.0 53.4,0.0 54.2,0.0 55.0,0.0 55.8,0.0 56.6,0.0 57.4,0.0 58.2,0.0 59.0,0.0 59.8,0.0 60.6,0.0 61.4,0.0 62.2,0.0 63.0,0.0 63.8,0.0 64.6,0.0 65.4,0.0 66.2,0.0 67.0,0.0 67.8,0.0 68.6,0.0 69.4,0.0 70.2,0.0 71.0,0.0 71.8,0.0 72.6,0.0 73.4,0.0 74.2,0.0 75.0,0.0 75.8,0.0 76.6,0.0 77.4,0.0 78.2,0.0 79.0,0.0 79.8,0.0 80.6,0.0 81.4,0.0 82.2,0.0 83.0,0.0 83.8,0.0 84.6,0.0 85.4,0.0 86.2,0.0 87.0,0.0 87.8,0.0 88.6,0.0 89.4,0.0 90.2,0.0 91.0,0.0 91.8,0.0 92.6,0.0 93.4,0.0 94.2,0.0 95.0,0.0 95.8,0.0 96.6,0.0 97.4,0.0 98.2,0.0 99.0,0.0 99.8,0.0 100.6,0.0 101.4,0.0 102.2,0.0 103.0,0.0 103.8,0.0 104.6,0.0 105.4,0.0 106.2,0.0 107.0,0.0 107.8,0.0 108.6,0.0 109.4,0.0 110.2,0.0 111.0,0.0 111.8,0.0 112.6,0.0 113.4,0.0 114.2,0.0 115.0,0.0 115.8,0.0 116.6,0.0 117.4,0.0 118.2,0.0 119.0,0.0 119.8,0.0 120.6,0.0 121.4,0.0 122.2,0.0 123.0,0.0 123.8,0.0 124.6,0.0 125.4,0.0 126.2,0.0 127.0,0.0 127.8,0.0 128.6,0.0 129.4,0.0 130.2,0.0 131.0,0.0 131.8,0.0 132.6,0.0 133.4,0.0 134.2,0.0 135.0,0.0 135.8,0.0 136.6,0.0 137.4,0.0 138.2,0.0 139.0,0.0 139.8,0.0 140.6,0.0 141.4,0.0 142.2,0.0 143.0,0.0 143.8,0.0 144.6,0.0 145.4,0.0 146.2,0.0 147.0,0.0 147.8,0.0 148.6,0.0 149.4,0.0 150.2,0.0 151.0,0.0 151.8,0.0 152.6,0.0 153.4,0.0 154.2,0.0 155.0,0.0 155.8,0.0 156.6,0.0 157.4,0.0 158.2,0.0 159.0,0.0 159.8,0.0 160.6,0.0 161.4,0.0 162.2,0.0 163.0,0.0 163.8,0.0 164.6,0.0 165.4,0.0 166.2,0.0 167.0,0.0 167.8,0.0 168.6,0.0 169.4,0.0 170.2,0.0 171.0,0.0 171.8,0.0 172.6,0.0 173.4,0.0 174.2,0.0 175.0,0.0 175.8,0.0 176.6,0.0 177.4,0.0 178.2,0.0 179.0,0.0 179.8,0.0 180.6,0.0 181.4,0.0 182.2,0.0 183.0,0.0 183.8,0.0 184.6,0.0 185.4,0.0 186.2,0.0 187.0,0.0 187.8,0.0 188.6,0.0 189.4,0.0 190.2,0.0 191.0,0.0 191.8,0.0 192.6,0.0 193.4,0.0 194.2,0.0 195.0,0.0 195.8,0.0 196.6,0.0 197.4,0.0 198.2,0.0 199.0,0.0 199.8,0.0 199.8,3.8 199.0,5.8 198.2,5.1 197.4,6.6 196.6,5.6 195.8,3.7 195.0,4.0 194.2,3.1 193.4,5.1 192.6,3.7 191.8,2.4 191.0,4.3 190.2,2.7 189.4,4.8 188.6,6.2 187.8,2.8 187.0,2.7 186.2,5.2 185.4,6.3 184.6,3.5 183.8,3.3 183.0,4.7 182.2,6.8 181.4,2.6 180.6,5.7 179.8,2.1 179.0,5.8 178.2,6.1 177.4,4.6 176.6,4.4 175.8,4.0 175.0,5.9 174.2,5.4 173.4,4.1 172.6,5.0 171.8,4.0 171.0,4.2 170.2,2.5 169.4,3.6 168.6,3.0 167.8,4.2 167.0,3.7 166.2,6.4 165.4,6.4 164.6,5.9 163.8,5.5 163.0,4.5 162.2,5.8 161.4,3.1 160.6,2.2 159.8,5.6 159.0,5.8 158.2,6.1 157.4,6.6 156.6,5.0 155.8,2.1 155.0,6.6 154.2,4.2 153.4,5.5 152.6,5.7 151.8,3.1 151.0,4.8 150.2,2.2 149.4,5.7 148.6,3.5 147.8,3.0 147.0,3.2 146.2,6.7 145.4,3.3 144.6,3.2 143.8,4.9 143.0,5.3 142.2,2.7 141.4,5.2 140.6,5.8 139.8,5.1 139.0,3.8 138.2,5.4 137.4,3.3 136.6,6.5 135.8,2.8 135.0,5.7 134.2,2.3 133.4,4.6 132.6,2.9 131.8,2.1 131.0,3.5 130.2,5.8 129.4,3.9 128.6,4.0 127.8,3.9 127.0,3.0 126.2,3.4 125.4,5.2 124.6,6.1 123.8,3.8 123.0,6.8 122.2,5.2 121.4,3.0 120.6,5.3 119.8,5.1 119.0,6.3 118.2,3.5 117.4,7.0 116.6,3.6 115.8,5.7 115.0,6.2 114.2,5.5 113.4,6.9 112.6,3.0 111.8,5.9 111.0,4.1 110.2,2.1 109.4,3.6 108.6,6.5 107.8,5.8 107.0,6.6 106.2,3.8 105.4,2.0 104.6,5.7 103.8,6.4 103.0,3.1 102.2,2.9 101.4,6.1 100.6,3.0 99.8,5.3 99.0,5.5 98.2,6.8 97.4,4.9 96.6,2.6 95.8,4.8 95.0,4.6 94.2,6.6 93.4,2.2 92.6,3.2 91.8,6.8 91.0,4.1 90.2,3.7 89.4,3.1 88.6,4.8 87.8,3.7 87.0,5.8 86.2,6.6 85.4,4.6 84.6,2.2 83.8,3.9 83.0,5.8 82.2,4.3 81.4,5.5 80.6,2.7 79.8,6.8 79.0,6.5 78.2,5.5 77.4,5.7 76.6,5.4 75.8,5.6 75.0,4.7 74.2,5.1 73.4,2.2 72.6,6.0 71.8,5.1 71.0,6.9 70.2,4.6 69.4,2.4 68.6,3.9 67.8,6.9 67.0,3.2 66.2,3.3 65.4,5.2 64.6,4.0 63.8,4.4 63.0,3.7 62.2,3.0 61.4,3.3 60.6,6.3 59.8,5.5 59.0,3.4 58.2,2.9 57.4,4.7 56.6,5.6 55.8,6.5 55.0,9.0 54.2,7.8 53.4,6.7 52.6,9.5 51.8,7.3 51.0,7.1 50.2,6.3 49.4,2.9 48.6,9.7 47.8,4.9 47.0,7.6 46.2,9.2 45.4,9.2 44.6,11.0 43.8,13.2 43.0,22.5 42.2,25.5 41.4,44.0 40.6,76.0 39.8,92.0 39.0,60.0 38.2,36.0 37.4,28.0 36.6,12.0 35.8,16.8 35.0,12.6 34.2,11.3 33.4,32.4 32.6,61.2 31.8,54.0 31.0,45.6 30.2,76.0 29.4,45.6 28.6,15.2 27.8,13.4 27.0,28.8 26.2,44.2 25.4,36.5 24.6,21.1 23.8,14.1 23.0,18.8 22.2,21.2 21.4,11.4 20.6,23.4 19.8,44.2 19.0,65.0 18.2,44.2 17.4,23.4 16.6,21.3 15.8,45.6 15.0,69.9 14.2,57.8 13.4,33.4 12.6,28.0 11.8,36.0 11.0,20.0 10.2,31.5 9.4,24.5 8.6,15.4 7.8,23.8 7.0,41.0 6.2,49.7 5.4,32.4 4.6,15.1 3.8,20.4 3.0,30.0 2.2,20.4 1.4,12.6"/><polygon points="1.4,257.9 2.2,252.3 3.0,240.6 3.8,252.3 4.6,251.5 5.4,256.1 6.2,250.1 7.0,254.4 7.8,258.6 8.6,243.8 9.4,227.2 10.2,239.7 11.0,256.3 11.8,241.1 12.6,249.1 13.4,239.9 14.2,215.1 15.0,208.9 15.8,233.7 16.6,241.1 17.4,241.1 18.2,256.2 19.0,237.7 19.8,219.1 20.6,237.7 21.4,252.6 22.2,245.6 23.0,254.6 23.8,254.2 24.6,252.9 25.4,255.9 26.2,258.6 27.0,252.1 27.8,232.1 28.6,242.1 29.4,257.9 30.2,232.3 31.0,206.7 31.8,213.1 32.6,238.7 33.4,242.1 34.2,232.1 35.0,252.1 35.8,252.7 36.6,241.1 37.4,241.1 38.2,255.5 39.0,234.4 39.8,205.9 40.6,198.8 41.4,227.3 42.2,255.3 43.0,242.1 43.8,251.5 44.6,257.9 45.4,263.0 46.2,266.0 47.0,270.2 47.8,267.5 48.6,267.5 49.4,269.8 50.2,266.0 51.0,268.3 51.8,267.8 52.6,265.5 53.4,269.3 54.2,270.2 55.0,269.5 55.8,270.9 56.6,269.0 57.4,269.0 58.2,273.0 59.0,270.4 59.8,273.7 60.6,271.1 61.4,272.3 62.2,273.0 63.0,273.2 63.8,273.7 64.6,271.7 65.4,272.9 66.2,273.8 67.0,272.5 67.8,273.2 68.6,272.3 69.4,274.0 70.2,271.8 71.0,269.6 71.8,271.3 72.6,272.1 73.4,272.8 74.2,272.4 75.0,273.9 75.8,271.5 76.6,269.9 77.4,270.1 78.2,273.1 79.0,268.7 79.8,273.2 80.6,270.8 81.4,269.0 82.2,273.6 83.0,273.7 83.8,270.6 84.6,271.2 85.4,272.8 86.2,270.2 87.0,273.1 87.8,271.5 88.6,273.5 89.4,270.6 90.2,273.3 91.0,272.3 91.8,272.3 92.6,272.5 93.4,271.0 94.2,271.1 95.0,270.8 95.8,271.4 96.6,271.9 97.4,271.3 98.2,271.0 99.0,274.0 99.8,273.3 100.6,271.5 101.4,273.3 102.2,272.6 103.0,271.6 103.8,270.6 104.6,271.8 105.4,272.9 106.2,269.2 107.0,270.8 107.8,274.0 108.6,273.1 109.4,274.1 110.2,272.4 111.0,270.9 111.8,273.0 112.6,271.2 113.4,268.6 114.2,273.3 115.0,273.7 115.8,273.2 116.6,270.6 117.4,272.4 118.2,273.4 119.0,273.2 119.8,272.8 120.6,274.1 121.4,272.2 122.2,273.5 123.0,272.1 123.8,269.6 124.6,271.0 125.4,273.8 126.2,270.9 127.0,270.8 127.8,271.9 128.6,271.2 129.4,273.2 130.2,271.2 131.0,272.1 131.8,272.4 132.6,273.7 133.4,271.9 134.2,272.8 135.0,273.4 135.8,270.8 136.6,271.2 137.4,273.0 138.2,273.5 139.0,272.2 139.8,271.3 140.6,271.5 141.4,272.0 142.2,272.6 143.0,274.1 143.8,273.4 144.6,273.8 145.4,271.8 146.2,271.2 147.0,271.4 147.8,272.3 148.6,271.0 149.4,271.5 150.2,271.5 151.0,271.3 151.8,274.0 152.6,271.0 153.4,270.7 154.2,272.1 155.0,274.0 155.8,271.7 156.6,271.2 157.4,273.7 158.2,271.2 159.0,271.0 159.8,273.0 160.6,272.6 161.4,273.8 162.2,274.1 163.0,271.2 163.8,271.7 164.6,272.9 165.4,273.4 166.2,272.5 167.0,273.6 167.8,272.1 168.6,271.6 169.4,273.5 170.2,273.7 171.0,271.9 171.8,271.7 172.6,271.5 173.4,271.6 174.2,272.5 175.0,271.9 175.8,270.8 176.6,274.0 177.4,272.1 178.2,272.7 179.0,268.7 179.8,272.6 180.6,272.3 181.4,271.3 182.2,271.9 183.0,271.2 183.8,273.4 184.6,272.6 185.4,271.2 186.2,274.1 187.0,271.4 187.8,272.0 188.6,271.7 189.4,273.3 190.2,272.4 191.0,271.8 191.8,271.9 192.6,272.3 193.4,271.1 194.2,272.6 195.0,273.1 195.8,273.1 196.6,272.2 197.4,271.8 198.2,272.0 199.0,273.5 199.8,271.3 199.8,281.2 199.0,283.3 198.2,282.4 197.4,282.2 196.6,280.1 195.8,282.8 195.0,282.4 194.2,281.1 193.4,281.9 192.6,280.2 191.8,282.5 191.0,281.6 190.2,280.1 189.4,280.3 188.6,281.6 187.8,283.2 187.0,283.3 186.2,281.0 185.4,280.6 184.6,281.4 183.8,281.1 183.0,281.0 182.2,281.7 181.4,282.1 180.6,281.5 179.8,281.0 179.0,281.1 178.2,282.5 177.4,281.9 176.6,282.8 175.8,282.8 175.0,281.7 174.2,280.4 173.4,282.6 172.6,282.1 171.8,281.7 171.0,281.5 170.2,282.9 169.4,283.5 168.6,280.6 167.8,283.2 167.0,282.7 166.2,282.7 165.4,281.9 164.6,283.2 163.8,282.9 163.0,281.1 162.2,282.9 161.4,280.1 160.6,282.6 159.8,283.1 159.0,281.0 158.2,280.4 157.4,280.2 156.6,280.3 155.8,282.7 155.0,281.3 154.2,282.3 153.4,282.5 152.6,283.3 151.8,282.7 151.0,282.3 150.2,282.6 149.4,280.5 148.6,280.1 147.8,280.7 147.0,283.4 146.2,282.0 145.4,282.4 144.6,282.8 143.8,280.6 143.0,281.4 142.2,280.6 141.4,280.1 140.6,283.0 139.8,282.1 139.0,280.5 138.2,282.0 137.4,280.7 136.6,283.3 135.8,282.7 135.0,283.4 134.2,283.1 133.4,282.8 132.6,280.4 131.8,282.8 131.0,281.7 130.2,282.0 129.4,280.2 128.6,281.5 127.8,282.9 127.0,280.3 126.2,282.9 125.4,281.9 124.6,280.2 123.8,283.3 123.0,283.1 122.2,281.1 121.4,281.5 120.6,280.7 119.8,281.0 119.0,280.5 118.2,283.4 117.4,283.3 116.6,282.9 115.8,283.2 115.0,282.1 114.2,282.5 113.4,280.4 112.6,282.0 111.8,282.8 111.0,282.7 110.2,281.5 109.4,282.3 108.6,281.0 107.8,281.0 107.0,281.5 106.2,281.8 105.4,283.5 104.6,281.3 103.8,280.7 103.0,281.5 102.2,280.6 101.4,283.4 100.6,283.5 99.8,281.6 99.0,281.6 98.2,281.0 97.4,281.2 96.6,280.3 95.8,282.4 95.0,282.8 94.2,280.5 93.4,280.1 92.6,283.2 91.8,280.9 91.0,280.3 90.2,283.2 89.4,280.8 88.6,283.3 87.8,282.4 87.0,280.5 86.2,282.7 85.4,282.9 84.6,281.0 83.8,281.6 83.0,283.3 82.2,283.0 81.4,280.1 80.6,281.9 79.8,280.8 79.0,281.7 78.2,281.7 77.4,281.0 76.6,280.6 75.8,281.4 75.0,280.4 74.2,282.7 73.4,282.1 72.6,282.5 71.8,281.9 71.0,283.0 70.2,281.5 69.4,280.9 68.6,280.1 67.8,281.3 67.0,281.0 66.2,282.4 65.4,280.3 64.6,283.0 63.8,281.8 63.0,282.0 62.2,281.9 61.4,280.7 60.6,282.0 59.8,282.9 59.0,280.5 58.2,284.5 57.4,281.0 56.6,283.0 55.8,281.9 55.0,285.8 54.2,283.1 53.4,281.3 52.6,287.6 51.8,285.1 51.0,286.5 50.2,284.0 49.4,287.4 48.6,284.2 47.8,291.0 47.0,284.8 46.2,291.2 45.4,283.6 44.6,302.3 43.8,300.9 43.0,307.1 42.2,302.2 41.4,335.6 40.6,369.1 39.8,360.7 39.0,327.3 38.2,302.6 37.4,297.2 36.6,315.6 35.8,326.6 35.0,304.6 34.2,299.4 33.4,317.1 32.6,317.1 31.8,299.3 31.0,323.0 30.2,347.5 29.4,335.2 28.6,310.8 27.8,311.1 27.0,307.1 26.2,304.9 25.4,322.0 24.6,322.0 23.8,304.9 23.0,302.7 22.2,313.1 21.4,305.1 20.6,329.1 19.8,353.6 19.0,329.1 18.2,304.6 17.4,313.1 16.6,313.1 15.8,314.1 15.0,335.2 14.2,329.9 13.4,308.8 12.6,301.2 11.8,296.3 11.0,302.9 10.2,313.1 9.4,305.1 8.6,297.6 7.8,309.7 7.0,325.1 6.2,309.7 5.4,302.0 4.6,299.7 3.8,301.1 3.0,317.1 2.2,301.1 1.4,300.3"/><polygon points="1.4,542.8 2.2,540.2 3.0,536.7 3.8,526.7 4.6,531.7 5.4,541.5 6.2,538.3 7.0,541.0 7.8,530.3 8.6,518.7 9.4,507.1 10.2,515.8 11.0,527.4 11.8,539.0 12.6,538.3 13.4,516.6 14.2,494.8 15.0,489.4 15.8,511.1 16.6,521.2 17.4,521.2 18.2,508.4 19.0,486.6 19.8,497.5 20.6,519.3 21.4,540.3 22.2,533.2 23.0,522.5 23.8,511.9 24.6,517.2 25.4,527.9 26.2,528.4 27.0,514.5 27.8,500.7 28.6,507.6 29.4,521.5 30.2,535.2 31.0,516.5 31.8,497.9 32.6,479.2 33.4,497.9 34.2,516.5 35.0,519.2 35.8,531.2 36.6,543.0 37.4,539.0 38.2,537.3 39.0,537.1 39.8,488.5 40.6,476.4 41.4,524.7 42.2,517.7 43.0,531.7 43.8,542.2 44.6,538.4 45.4,549.2 46.2,549.2 47.0,549.2 47.8,543.1 48.6,536.2 49.4,543.1 50.2,549.2 51.0,549.2 51.8,549.2 52.6,549.2 53.4,549.2 54.2,549.2 55.0,549.2 55.8,549.2 56.6,549.2 57.4,546.6 58.2,543.0 59.0,545.7 59.8,549.2 60.6,549.2 61.4,549.2 62.2,549.2 63.0,549.2 63.8,549.2 64.6,549.2 65.4,549.2 66.2,549.2 67.0,549.2 67.8,549.2 68.6,549.2 69.4,549.2 70.2,549.2 71.0,549.2 71.8,549.2 72.6,549.2 73.4,549.2 74.2,549.2 75.0,549.2 75.8,549.2 76.6,549.2 77.4,549.2 78.2,549.2 79.0,549.2 79.8,549.2 80.6,549.2 81.4,549.2 82.2,549.2 83.0,549.2 83.8,549.2 84.6,549.2 85.4,549.2 86.2,549.2 87.0,549.2 87.8,549.2 88.6,549.2 89.4,549.2 90.2,549.2 91.0,549.2 91.8,549.2 92.6,549.2 93.4,549.2 94.2,549.2 95.0,549.2 95.8,549.2 96.6,549.2 97.4,549.2 98.2,549.2 99.0,549.2 99.8,549.2 100.6,549.2 101.4,549.2 102.2,549.2 103.0,549.2 103.8,549.2 104.6,549.2 105.4,549.2 106.2,549.2 107.0,549.2 107.8,549.2 108.6,549.2 109.4,549.2 110.2,549.2 111.0,549.2 111.8,549.2 112.6,549.2 113.4,549.2 114.2,549.2 115.0,549.2 115.8,549.2 116.6,549.2 117.4,549.2 118.2,549.2 119.0,549.2 119.8,549.2 120.6,549.2 121.4,549.2 122.2,549.2 123.0,549.2 123.8,549.2 124.6,549.2 125.4,549.2 126.2,549.2 127.0,549.2 127.8,549.2 128.6,549.2 129.4,549.2 130.2,549.2 131.0,549.2 131.8,549.2 132.6,549.2 133.4,549.2 134.2,549.2 135.0,549.2 135.8,549.2 136.6,549.2 137.4,549.2 138.2,549.2 139.0,549.2 139.8,549.2 140.6,549.2 141.4,549.2 142.2,549.2 143.0,549.2 143.8,549.2 144.6,549.2 145.4,549.2 146.2,549.2 147.0,549.2 147.8,549.2 148.6,549.2 149.4,549.2 150.2,549.2 151.0,549.2 151.8,549.2 152.6,549.2 153.4,549.2 154.2,549.2 155.0,549.2 155.8,549.2 156.6,549.2 157.4,549.2 158.2,549.2 159.0,549.2 159.8,549.2 160.6,549.2 161.4,549.2 162.2,549.2 163.0,549.2 163.8,549.2 164.6,549.2 165.4,549.2 166.2,549.2 167.0,549.2 167.8,549.2 168.6,549.2 169.4,549.2 170.2,549.2 171.0,549.2 171.8,549.2 172.6,549.2 173.4,549.2 174.2,549.2 175.0,549.2 175.8,549.2 176.6,549.2 177.4,549.2 178.2,549.2 179.0,549.2 179.8,549.2 180.6,549.2 181.4,549.2 182.2,549.2 183.0,549.2 183.8,549.2 184.6,549.2 185.4,549.2 186.2,549.2 187.0,549.2 187.8,549.2 188.6,549.2 189.4,549.2 190.2,549.2 191.0,549.2 191.8,549.2 192.6,549.2 193.4,549.2 194.2,549.2 195.0,549.2 195.8,549.2 196.6,549.2 197.4,549.2 198.2,549.2 199.0,549.2 199.8,549.2 199.8,549.2 199.0,549.2 198.2,549.2 197.4,549.2 196.6,549.2 195.8,549.2 195.0,549.2 194.2,549.2 193.4,549.2 192.6,549.2 191.8,549.2 191.0,549.2 190.2,549.2 189.4,549.2 188.6,549.2 187.8,549.2 187.0,549.2 186.2,549.2 185.4,549.2 184.6,549.2 183.8,549.2 183.0,549.2 182.2,549.2 181.4,549.2 180.6,549.2 179.8,549.2 179.0,549.2 178.2,549.2 177.4,549.2 176.6,549.2 175.8,549.2 175.0,549.2 174.2,549.2 173.4,549.2 172.6,549.2 171.8,549.2 171.0,549.2 170.2,549.2 169.4,549.2 168.6,549.2 167.8,549.2 167.0,549.2 166.2,549.2 165.4,549.2 164.6,549.2 163.8,549.2 163.0,549.2 162.2,549.2 161.4,549.2 160.6,549.2 159.8,549.2 159.0,549.2 158.2,549.2 157.4,549.2 156.6,549.2 155.8,549.2 155.0,549.2 154.2,549.2 153.4,549.2 152.6,549.2 151.8,549.2 151.0,549.2 150.2,549.2 149.4,549.2 148.6,549.2 147.8,549.2 147.0,549.2 146.2,549.2 145.4,549.2 144.6,549.2 143.8,549.2 143.0,549.2 142.2,549.2 141.4,549.2 140.6,549.2 139.8,549.2 139.0,549.2 138.2,549.2 137.4,549.2 136.6,549.2 135.8,549.2 135.0,549.2 134.2,549.2 133.4,549.2 132.6,549.2 131.8,549.2 131.0,549.2 130.2,549.2 129.4,549.2 128.6,549.2 127.8,549.2 127.0,549.2 126.2,549.2 125.4,549.2 124.6,549.2 123.8,549.2 123.0,549.2 122.2,549.2 121.4,549.2 120.6,549.2 119.8,549.2 119.0,549.2 118.2,549.2 117.4,549.2 116.6,549.2 115.8,549.2 115.0,549.2 114.2,549.2 113.4,549.2 112.6,549.2 111.8,549.2 111.0,549.2 110.2,549.2 109.4,549.2 108.6,549.2 107.8,549.2 107.0,549.2 106.2,549.2 105.4,549.2 104.6,549.2 103.8,549.2 103.0,549.2 102.2,549.2 101.4,549.2 100.6,549.2 99.8,549.2 99.0,549.2 98.2,549.2 97.4,549.2 96.6,549.2 95.8,549.2 95.0,549.2 94.2,549.2 93.4,549.2 92.6,549.2 91.8,549.2 91.0,549.2 90.2,549.2 89.4,549.2 88.6,549.2 87.8,549.2 87.0,549.2 86.2,549.2 85.4,549.2 84.6,549.2 83.8,549.2 83.0,549.2 82.2,549.2 81.4,549.2 80.6,549.2 79.8,549.2 79.0,549.2 78.2,549.2 77.4,549.2 76.6,549.2 75.8,549.2 75.0,549.2 74.2,549.2 73.4,549.2 72.6,549.2 71.8,549.2 71.0,549.2 70.2,549.2 69.4,549.2 68.6,549.2 67.8,549.2 67.0,549.2 66.2,549.2 65.4,549.2 64.6,549.2 63.8,549.2 63.0,549.2 62.2,549.2 61.4,549.2 60.6,549.2 59.8,549.2 59.0,549.2 58.2,549.2 57.4,549.2 56.6,549.2 55.8,549.2 55.0,549.2 54.2,549.2 53.4,549.2 52.6,549.2 51.8,549.2 51.0,549.2 50.2,549.2 49.4,549.2 48.6,549.2 47.8,549.2 47.0,549.2 46.2,549.2 45.4,549.2 44.6,549.2 43.8,549.2 43.0,549.2 42.2,549.2 41.4,549.2 40.6,549.2 39.8,549.2 39.0,549.2 38.2,549.2 37.4,549.2 36.6,549.2 35.8,549.2 35.0,549.2 34.2,549.2 33.4,549.2 32.6,549.2 31.8,549.2 31.0,549.2 30.2,549.2 29.4,549.2 28.6,549.2 27.8,549.2 27.0,549.2 26.2,549.2 25.4,549.2 24.6,549.2 23.8,549.2 23.0,549.2 22.2,549.2 21.4,549.2 20.6,549.2 19.8,549.2 19.0,549.2 18.2,549.2 17.4,549.2 16.6,549.2 15.8,549.2 15.0,549.2 14.2,549.2 13.4,549.2 12.6,549.2 11.8,549.2 11.0,549.2 10.2,549.2 9.4,549.2 8.6,549.2 7.8,549.2 7.0,549.2 6.2,549.2 5.4,549.2 4.6,549.2 3.8,549.2 3.0,549.2 2.2,549.2 1.4,549.2"/></g></svg>
<div style="left:714.8px;top:118px;width:1.5px;height:633px;background:#2a2b2c;"></div>
<div style="left:716.3px;top:118px;width:380.70000000000005px;height:633px;background:#242628;"></div>
<div style="left:716.3px;top:118px;width:380.70000000000005px;height:74.30000000000001px;background:#454647;"></div>
<div class="t" style="left:823.5px;top:119.9px;width:120px;height:24px;line-height:24px;font-size:12px;color:#e8e8e8;text-align:center;font-weight:normal;">Track 2 设置</div>
<svg style="position:absolute;left:1049px;top:125px;" width="17" height="16" viewBox="0 0 17 16"><circle cx="8.4" cy="7.8" r="7.2" fill="#eeeeee"/><text x="8.4" y="11.9" font-family="Liberation Sans" font-weight="bold" font-size="11" text-anchor="middle" fill="#3a3b3c">?</text></svg>
<svg style="position:absolute;left:1074px;top:125px;" width="17" height="16" viewBox="0 0 17 16"><circle cx="8" cy="7.8" r="7.2" fill="#eeeeee"/><path d="M5.2 5 L10.8 10.6 M10.8 5 L5.2 10.6" stroke="#3a3b3c" stroke-width="2.2"/></svg>
<svg style="position:absolute;left:728px;top:156px;" width="29" height="30" viewBox="0 0 29 30"><g fill="none" stroke="#6ee36e" stroke-width="1.3"><path d="M10.8 3.5 L10.8 20.5 Q13.7 22.6 16.6 20.5 L16.6 3.5"/><path d="M13.7 21.8 L13.7 24.5"/><circle cx="13.7" cy="26.3" r="1.6"/><path d="M7.2 8 Q4.8 12 7.2 16"/><path d="M4.6 6.6 Q1.4 12 4.6 17.4"/><path d="M20.2 8 Q22.6 12 20.2 16"/><path d="M22.8 6.6 Q26 12 22.8 17.4"/></g></svg>
<div style="left:807px;top:153.4px;width:194.70000000000005px;height:30.5px;background:#1b1c1f;"></div>
<div class="t" style="left:836.5px;top:155.7px;width:120px;height:26px;line-height:26px;font-size:13px;color:#dcdcdc;text-align:center;font-weight:normal;">频谱+3D声谱图</div>
<svg style="position:absolute;left:989px;top:165px;" width="11" height="7" viewBox="0 0 11 7"><path d="M0.5 0.8 L10 0.8 L5.25 6Z" fill="#dcdcdc"/></svg>
<svg style="position:absolute;left:1063px;top:159px;" width="22" height="22" viewBox="0 0 22 22"><polygon points="20.41,9.09 20.60,10.96 17.78,12.32 17.40,13.62 19.00,16.30 17.81,17.76 14.86,16.73 13.67,17.38 12.91,20.41 11.04,20.60 9.68,17.78 8.38,17.40 5.70,19.00 4.24,17.81 5.27,14.86 4.62,13.67 1.59,12.91 1.40,11.04 4.22,9.68 4.60,8.38 3.00,5.70 4.19,4.24 7.14,5.27 8.33,4.62 9.09,1.59 10.96,1.40 12.32,4.22 13.62,4.60 16.30,3.00 17.76,4.19 16.73,7.14 17.38,8.33" fill="#8a8c8d"/><circle cx="11" cy="11" r="3.26" fill="#454647"/></svg>
<div style="left:724.6px;top:208.6px;width:170.0px;height:43.70000000000002px;border:1px solid #3a3c3d;background:#25272a;"></div>
<div style="left:746.0px;top:208.6px;width:1.0px;height:43.70000000000002px;background:#3a3c3d;"></div>
<div style="left:794.9px;top:208.6px;width:1.0px;height:43.70000000000002px;background:#3a3c3d;"></div>
<div style="left:816.3px;top:208.6px;width:1.0px;height:43.70000000000002px;background:#3a3c3d;"></div>
<div style="left:871.0px;top:208.6px;width:1.0px;height:43.70000000000002px;background:#3a3c3d;"></div>
<div style="left:746.5px;top:229px;width:70.29999999999995px;height:1.5px;background:#3a3c3d;"></div>
<svg style="position:absolute;left:727px;top:224px;" width="16" height="16" viewBox="0 0 16 16"><g fill="none" stroke="#1ea7dd" stroke-width="2" stroke-linecap="round"><path d="M4.2 4.6 A6 6 0 1 0 11.8 4.6"/><path d="M8 1.6 L8 7.6"/></g></svg>
<div class="t" style="left:746.0px;top:206.7px;width:50px;height:24px;line-height:24px;font-size:12px;color:#c4c4c4;text-align:center;font-weight:normal;">Band</div>
<div class="t" style="left:761.0px;top:229.1px;width:20px;height:24px;line-height:24px;font-size:12px;color:#e6e6e6;text-align:center;font-weight:normal;">2</div>
<svg style="position:absolute;left:800px;top:217px;" width="10" height="6" viewBox="0 0 10 6"><path d="M0.5 5.2 L9.5 5.2 L5 0.5Z" fill="#bdbdbd"/></svg>
<svg style="position:absolute;left:800px;top:239px;" width="10" height="6" viewBox="0 0 10 6"><path d="M0.5 0.8 L9.5 0.8 L5 5.5Z" fill="#bdbdbd"/></svg>
<svg style="position:absolute;left:824px;top:219px;" width="40" height="23" viewBox="0 0 40 23"><path d="M4 18.6 Q20 -3.5 35.6 18.6" fill="none" stroke="#1ea7dd" stroke-width="2.4" stroke-linecap="round"/></svg>
<svg style="position:absolute;left:873px;top:220px;" width="20" height="21" viewBox="0 0 20 21"><g fill="none" stroke="#d6d6d6" stroke-width="1.2"><path d="M2.5 4.5 L17.5 4.5"/><path d="M7.5 4.5 L8 2.2 L12 2.2 L12.5 4.5"/><path d="M4 4.5 L5.3 18.5 L14.7 18.5 L16 4.5"/><path d="M8 7.5 L8.3 16 M10 7.5 L10 16 M12 7.5 L11.7 16"/></g></svg>
<div style="left:743.3px;top:291.7px;width:23.600000000000023px;height:23.600000000000023px;border:2px solid #a2a2a2;border-radius:50%;"></div>
<div style="left:802.1px;top:291.8px;width:25.199999999999932px;height:25.19999999999999px;background:#343638;border-radius:50%;"></div>
<svg style="position:absolute;left:807px;top:297px;" width="15" height="15" viewBox="0 0 15 15"><path d="M7.5 2 V13 M2 7.5 H13" stroke="#24baea" stroke-width="3.4" stroke-linecap="round"/></svg>
<div class="t" style="left:737.3px;top:323.0px;width:40px;height:24px;line-height:24px;font-size:12px;color:#8c8c8c;text-align:center;font-weight:normal;">动态</div>
<div class="t" style="left:901.6px;top:188.5px;width:50px;height:24px;line-height:24px;font-size:12px;color:#9a9a9a;text-align:center;font-weight:normal;">斜率</div>
<svg style="position:absolute;left:910.8px;top:213.6px;" width="30.0" height="30.0" viewBox="0 0 30.0 30.0"><circle cx="15.8" cy="15.6" r="9.6" fill="#2d2f30"/><circle cx="15" cy="15" r="9.4" fill="#7a7a7a"/><path d="M10.02 24.36 A10.6 10.6 0 0 1 4.56 16.84" fill="none" stroke="#80f07f" stroke-width="3.2"/><circle cx="9.0" cy="15.0" r="1.7" fill="#80f07f"/></svg>
<div class="t" style="left:891.3px;top:241.2px;width:70px;height:24px;line-height:24px;font-size:12px;color:#8a8a8a;text-align:center;font-weight:normal;">3.7</div>
<div class="t" style="left:969.3px;top:188.5px;width:50px;height:24px;line-height:24px;font-size:12px;color:#9a9a9a;text-align:center;font-weight:normal;">频率</div>
<svg style="position:absolute;left:978.5px;top:213.6px;" width="30.0" height="30.0" viewBox="0 0 30.0 30.0"><circle cx="15.8" cy="15.6" r="9.6" fill="#2d2f30"/><circle cx="15" cy="15" r="9.4" fill="#7a7a7a"/><path d="M8.92 23.68 A10.6 10.6 0 0 1 14.08 4.44" fill="none" stroke="#80f07f" stroke-width="3.2"/><circle cx="15.0" cy="8.0" r="1.7" fill="#80f07f"/></svg>
<div class="t" style="left:959.0px;top:241.2px;width:70px;height:24px;line-height:24px;font-size:12px;color:#8a8a8a;text-align:center;font-weight:normal;">2500 Hz</div>
<div class="t" style="left:1032.5px;top:188.5px;width:50px;height:24px;line-height:24px;font-size:12px;color:#9a9a9a;text-align:center;font-weight:normal;">增益</div>
<svg style="position:absolute;left:1041.7px;top:213.6px;" width="30.0" height="30.0" viewBox="0 0 30.0 30.0"><circle cx="15.8" cy="15.6" r="9.6" fill="#2d2f30"/><circle cx="15" cy="15" r="9.4" fill="#7a7a7a"/><path d="M8.92 23.68 A10.6 10.6 0 0 1 14.08 4.44" fill="none" stroke="#80f07f" stroke-width="3.2"/><circle cx="15.4" cy="8.0" r="1.7" fill="#80f07f"/></svg>
<div class="t" style="left:1022.2px;top:241.2px;width:70px;height:24px;line-height:24px;font-size:12px;color:#8a8a8a;text-align:center;font-weight:normal;">0.0 dB</div>
<svg style="position:absolute;left:716.6px;top:349.1px;" width="378.4" height="174.69999999999993" viewBox="0 0 378.4 174.69999999999993"><rect x="0" y="0" width="378.4" height="174.69999999999993" fill="#1c1d20"/><path d="M0.0 91.7 L1.7 90.0 L3.4 88.4 L5.0 86.7 L6.7 85.0 L8.5 84.3 L10.2 83.7 L12.0 83.0 L13.7 82.4 L15.5 81.7 L17.4 81.1 L19.2 80.6 L21.1 80.0 L22.9 79.5 L24.8 78.9 L26.6 78.4 L28.5 77.8 L30.3 77.3 L32.1 76.8 L34.0 76.2 L35.8 75.6 L37.7 75.1 L39.5 74.9 L41.4 74.7 L43.2 74.5 L45.1 74.3 L46.9 74.1 L48.8 73.9 L50.6 73.2 L52.5 72.4 L54.3 71.7 L56.1 71.0 L58.0 70.2 L59.8 69.5 L61.8 67.9 L63.7 66.2 L65.6 64.5 L67.6 62.9 L69.8 61.8 L72.0 60.7 L73.9 63.6 L75.7 66.6 L77.6 69.5 L79.2 65.9 L80.9 62.3 L82.5 58.7 L84.2 54.9 L86.0 49.8 L87.9 45.7 L89.7 38.4 L91.6 39.7 L93.4 41.1 L95.3 40.6 L97.5 46.3 L99.7 51.2 L101.9 50.2 L104.1 45.8 L106.4 41.6 L108.6 35.8 L110.2 37.5 L111.9 36.0 L114.1 41.1 L116.3 52.6 L118.2 48.5 L120.0 43.2 L121.9 39.0 L124.1 41.0 L126.3 44.4 L128.1 49.3 L130.0 50.4 L131.8 53.9 L133.4 39.7 L135.1 24.4 L137.4 25.1 L139.6 23.9 L141.8 35.5 L144.0 44.2 L146.2 39.1 L148.4 33.0 L150.6 30.3 L152.9 26.1 L155.1 23.8 L157.3 25.0 L159.5 37.7 L161.7 49.9 L163.9 38.8 L166.2 26.7 L168.4 32.4 L170.6 38.8 L172.8 32.9 L175.0 30.8 L176.7 31.9 L178.3 36.2 L180.0 36.9 L181.7 38.7 L183.4 37.7 L185.0 33.8 L186.7 34.0 L188.3 41.0 L190.0 43.4 L191.6 49.6 L193.3 51.4 L195.5 40.7 L197.8 33.5 L199.4 24.2 L201.1 12.2 L203.0 17.5 L204.9 24.6 L206.9 33.2 L208.8 38.4 L210.5 23.7 L212.2 12.1 L214.0 16.7 L215.9 21.7 L217.7 29.8 L219.6 30.3 L221.6 34.9 L223.5 37.5 L225.5 39.5 L227.4 36.9 L229.4 29.8 L231.3 27.2 L233.2 20.4 L234.9 20.5 L236.5 18.6 L238.2 17.7 L239.9 19.4 L242.1 24.3 L244.3 27.8 L246.1 25.7 L248.0 18.6 L249.8 14.9 L251.7 19.7 L253.5 21.7 L255.4 22.5 L257.6 32.7 L259.8 36.3 L261.4 35.3 L263.1 36.3 L264.8 33.4 L266.4 32.2 L268.6 24.1 L270.9 17.0 L273.1 27.2 L275.3 34.2 L276.9 26.2 L278.6 15.9 L280.5 24.7 L282.3 35.2 L284.2 41.8 L286.4 35.5 L288.6 30.1 L290.8 31.7 L293.0 36.0 L295.2 34.6 L297.5 29.9 L299.3 28.9 L301.0 30.0 L302.8 33.5 L304.5 35.6 L306.3 34.0 L308.1 36.1 L309.9 35.0 L311.6 33.0 L313.4 31.4 L315.2 29.2 L317.0 29.8 L318.7 34.4 L320.5 32.4 L322.2 35.1 L324.0 34.2 L325.8 36.3 L327.6 35.1 L329.3 33.7 L331.1 33.0 L332.9 35.0 L334.7 32.2 L336.5 32.6 L338.2 33.7 L340.0 34.6 L341.8 33.5 L343.6 31.9 L345.3 34.2 L347.1 31.2 L348.8 30.2 L350.6 31.0 L352.4 32.3 L354.2 31.5 L355.9 32.6 L357.7 34.0 L359.5 35.5 L361.1 32.6 L362.8 32.4 L364.4 33.5 L366.1 32.7 L367.8 33.1 L369.5 34.9 L371.1 36.1 L372.8 36.0 L374.5 38.9 L376.1 42.2 L378.3 39.6 L378.4 174.7 L0 174.7 Z" fill="#2e3233"/><rect x="21.1" y="0" width="1" height="174.69999999999993" fill="#3a3e40" opacity="0.75"/><rect x="36.5" y="0" width="1" height="174.69999999999993" fill="#3a3e40" opacity="0.75"/><rect x="48.4" y="0" width="1" height="174.69999999999993" fill="#3a3e40" opacity="0.75"/><rect x="58.1" y="0" width="1" height="174.69999999999993" fill="#3a3e40" opacity="0.75"/><rect x="66.3" y="0" width="1" height="174.69999999999993" fill="#3a3e40" opacity="0.75"/><rect x="73.5" y="0" width="1" height="174.69999999999993" fill="#3a3e40" opacity="0.75"/><rect x="79.8" y="0" width="1" height="174.69999999999993" fill="#3a3e40" opacity="0.75"/><rect x="85.4" y="0" width="1" height="174.69999999999993" fill="#3a3e40" opacity="0.75"/><rect x="122.4" y="0" width="1" height="174.69999999999993" fill="#3a3e40" opacity="0.75"/><rect x="144.1" y="0" width="1" height="174.69999999999993" fill="#3a3e40" opacity="0.75"/><rect x="159.5" y="0" width="1" height="174.69999999999993" fill="#3a3e40" opacity="0.75"/><rect x="171.4" y="0" width="1" height="174.69999999999993" fill="#3a3e40" opacity="0.75"/><rect x="181.1" y="0" width="1" height="174.69999999999993" fill="#3a3e40" opacity="0.75"/><rect x="189.3" y="0" width="1" height="174.69999999999993" fill="#3a3e40" opacity="0.75"/><rect x="196.5" y="0" width="1" height="174.69999999999993" fill="#3a3e40" opacity="0.75"/><rect x="202.8" y="0" width="1" height="174.69999999999993" fill="#3a3e40" opacity="0.75"/><rect x="208.4" y="0" width="1" height="174.69999999999993" fill="#3a3e40" opacity="0.75"/><rect x="245.4" y="0" width="1" height="174.69999999999993" fill="#3a3e40" opacity="0.75"/><rect x="267.1" y="0" width="1" height="174.69999999999993" fill="#3a3e40" opacity="0.75"/><rect x="282.5" y="0" width="1" height="174.69999999999993" fill="#3a3e40" opacity="0.75"/><rect x="294.4" y="0" width="1" height="174.69999999999993" fill="#3a3e40" opacity="0.75"/><rect x="304.1" y="0" width="1" height="174.69999999999993" fill="#3a3e40" opacity="0.75"/><rect x="312.3" y="0" width="1" height="174.69999999999993" fill="#3a3e40" opacity="0.75"/><rect x="319.5" y="0" width="1" height="174.69999999999993" fill="#3a3e40" opacity="0.75"/><rect x="325.8" y="0" width="1" height="174.69999999999993" fill="#3a3e40" opacity="0.75"/><rect x="331.4" y="0" width="1" height="174.69999999999993" fill="#3a3e40" opacity="0.75"/><rect x="368.4" y="0" width="1" height="174.69999999999993" fill="#3a3e40" opacity="0.75"/><rect x="0" y="28.7" width="378.4" height="1" fill="#3a3e40"/><rect x="0" y="57.9" width="378.4" height="1" fill="#3a3e40"/><rect x="0" y="116.1" width="378.4" height="1" fill="#3a3e40"/><rect x="0" y="145.3" width="378.4" height="1" fill="#3a3e40"/><path d="M0.0 90.5 L1.7 88.8 L3.4 87.2 L5.0 85.5 L6.7 83.8 L8.5 83.1 L10.2 82.5 L12.0 81.8 L13.7 81.2 L15.5 80.5 L17.4 79.9 L19.2 79.4 L21.1 78.8 L22.9 78.3 L24.8 77.8 L26.6 77.2 L28.5 76.6 L30.3 76.1 L32.1 75.6 L34.0 75.0 L35.8 74.4 L37.7 73.9 L39.5 73.7 L41.4 73.5 L43.2 73.3 L45.1 73.1 L46.9 72.9 L48.8 72.7 L50.6 72.0 L52.5 71.2 L54.3 70.5 L56.1 69.8 L58.0 69.0 L59.8 68.3 L61.8 66.7 L63.7 65.0 L65.6 63.3 L67.6 61.7 L69.8 60.6 L72.0 59.5 L73.9 63.9 L75.7 66.9 L77.6 69.8 L79.2 66.2 L80.9 62.6 L82.5 59.0 L84.2 53.7 L86.0 48.6 L87.9 44.5 L89.7 37.2 L91.6 38.5 L93.4 39.9 L95.3 39.4 L97.5 45.1 L99.7 50.0 L101.9 49.0 L104.1 44.6 L106.4 40.4 L108.6 34.6 L110.2 36.3 L111.9 34.8 L114.1 39.9 L116.3 51.4 L118.2 47.3 L120.0 42.0 L121.9 37.8 L124.1 39.8 L126.3 43.2 L128.1 48.1 L130.0 49.2 L131.8 52.7 L133.4 38.5 L135.1 23.2 L137.4 23.9 L139.6 22.7 L141.8 34.3 L144.0 43.0 L146.2 37.9 L148.4 31.8 L150.6 29.1 L152.9 24.9 L155.1 22.6 L157.3 23.8 L159.5 36.5 L161.7 48.7 L163.9 37.6 L166.2 25.5 L168.4 31.2 L170.6 37.6 L172.8 31.7 L175.0 29.6 L176.7 30.7 L178.3 35.0 L180.0 35.7 L181.7 37.5 L183.4 36.5 L185.0 32.6 L186.7 32.8 L188.3 39.8 L190.0 42.2 L191.6 48.4 L193.3 50.2 L195.5 39.5 L197.8 32.3 L199.4 23.0 L201.1 11.0 L203.0 16.3 L204.9 23.4 L206.9 32.0 L208.8 37.2 L210.5 22.5 L212.2 10.9 L214.0 15.5 L215.9 20.5 L217.7 28.6 L219.6 29.1 L221.6 33.7 L223.5 36.3 L225.5 38.3 L227.4 35.7 L229.4 28.6 L231.3 26.0 L233.2 19.2 L234.9 19.3 L236.5 17.4 L238.2 16.5 L239.9 18.2 L242.1 23.1 L244.3 26.6 L246.1 24.5 L248.0 17.4 L249.8 13.7 L251.7 18.5 L253.5 20.5 L255.4 21.3 L257.6 31.5 L259.8 35.1 L261.4 34.1 L263.1 35.1 L264.8 32.2 L266.4 31.0 L268.6 22.9 L270.9 15.8 L273.1 26.0 L275.3 33.0 L276.9 25.0 L278.6 14.7 L280.5 23.5 L282.3 34.0 L284.2 40.6 L286.4 34.3 L288.6 28.9 L290.8 30.5 L293.0 34.8 L295.2 33.4 L297.5 28.7 L299.3 27.7 L301.0 28.8 L302.8 32.3 L304.5 34.4 L306.3 32.8 L308.1 34.9 L309.9 33.8 L311.6 31.8 L313.4 30.2 L315.2 28.0 L317.0 28.6 L318.7 33.2 L320.5 31.2 L322.2 33.9 L324.0 33.0 L325.8 35.1 L327.6 33.9 L329.3 32.5 L331.1 31.8 L332.9 33.8 L334.7 31.0 L336.5 31.4 L338.2 32.5 L340.0 33.4 L341.8 32.3 L343.6 30.7 L345.3 33.0 L347.1 30.0 L348.8 29.0 L350.6 29.8 L352.4 31.1 L354.2 30.3 L355.9 31.4 L357.7 32.8 L359.5 34.3 L361.1 31.4 L362.8 31.2 L364.4 32.3 L366.1 31.5 L367.8 31.9 L369.5 33.7 L371.1 34.9 L372.8 34.8 L374.5 37.7 L376.1 41.0 L378.3 38.4" fill="none" stroke="#1ea7dd" stroke-width="1.5"/><path d="M0.0 94.2 L1.7 92.5 L3.4 90.9 L5.0 89.2 L6.7 87.5 L8.5 86.8 L10.2 86.2 L12.0 85.5 L13.7 84.9 L15.5 84.2 L17.4 83.6 L19.2 83.1 L21.1 82.5 L22.9 82.0 L24.8 81.4 L26.6 80.9 L28.5 80.3 L30.3 79.8 L32.1 79.2 L34.0 78.7 L35.8 78.1 L37.7 77.6 L39.5 77.4 L41.4 77.2 L43.2 77.0 L45.1 74.7 L46.9 74.5 L48.8 74.3 L50.6 73.6 L52.5 72.8 L54.3 72.1 L56.1 71.4 L58.0 70.6 L59.8 69.9 L61.8 68.2 L63.7 66.6 L65.6 64.9 L67.6 63.3 L69.8 62.2 L72.0 61.1 L73.9 64.0 L75.7 67.0 L77.6 69.9 L79.2 66.3 L80.9 62.7 L82.5 59.1 L84.2 55.3 L86.0 50.2 L87.9 46.1 L89.7 38.8 L91.6 40.1 L93.4 41.5 L95.3 41.0 L97.5 46.7 L99.7 51.6 L101.9 50.6 L104.1 46.2 L106.4 42.0 L108.6 36.2 L110.2 37.9 L111.9 36.4 L114.1 41.5 L116.3 53.0 L118.2 48.9 L120.0 43.6 L121.9 39.4 L124.1 41.4 L126.3 44.8 L128.1 49.7 L130.0 50.8 L131.8 54.3 L133.4 40.1 L135.1 24.8 L137.4 25.5 L139.6 24.3 L141.8 35.9 L144.0 44.6 L146.2 39.5 L148.4 33.4 L150.6 30.7 L152.9 26.5 L155.1 24.2 L157.3 25.4 L159.5 38.1 L161.7 50.3 L163.9 39.2 L166.2 27.1 L168.4 32.8 L170.6 39.2 L172.8 33.3 L175.0 31.2 L176.7 32.3 L178.3 36.6 L180.0 37.3 L181.7 39.1 L183.4 38.1 L185.0 34.2 L186.7 34.4 L188.3 41.4 L190.0 43.8 L191.6 50.0 L193.3 51.8 L195.5 41.1 L197.8 33.9 L199.4 24.6 L201.1 12.6 L203.0 17.9 L204.9 25.0 L206.9 33.6 L208.8 38.8 L210.5 24.1 L212.2 12.5 L214.0 17.1 L215.9 22.1 L217.7 30.2 L219.6 30.7 L221.6 35.3 L223.5 37.9 L225.5 39.9 L227.4 37.3 L229.4 30.2 L231.3 27.6 L233.2 20.8 L234.9 20.9 L236.5 19.0 L238.2 18.1 L239.9 19.8 L242.1 24.7 L244.3 28.2 L246.1 26.1 L248.0 19.0 L249.8 15.3 L251.7 20.1 L253.5 22.1 L255.4 22.9 L257.6 33.1 L259.8 36.7 L261.4 35.7 L263.1 36.7 L264.8 33.8 L266.4 32.6 L268.6 24.5 L270.9 17.4 L273.1 27.6 L275.3 34.6 L276.9 26.6 L278.6 16.3 L280.5 25.1 L282.3 35.6 L284.2 42.2 L286.4 35.9 L288.6 30.5 L290.8 32.1 L293.0 36.4 L295.2 35.0 L297.5 30.3 L299.3 29.3 L301.0 30.4 L302.8 33.9 L304.5 36.0 L306.3 34.4 L308.1 36.5 L309.9 35.4 L311.6 33.4 L313.4 31.8 L315.2 29.6 L317.0 30.2 L318.7 34.8 L320.5 32.8 L322.2 35.5 L324.0 34.6 L325.8 36.7 L327.6 35.5 L329.3 34.1 L331.1 33.4 L332.9 35.4 L334.7 32.6 L336.5 33.0 L338.2 34.1 L340.0 35.0 L341.8 33.9 L343.6 32.3 L345.3 34.6 L347.1 31.6 L348.8 30.6 L350.6 31.4 L352.4 32.7 L354.2 31.9 L355.9 33.0 L357.7 34.4 L359.5 35.9 L361.1 33.0 L362.8 32.8 L364.4 33.9 L366.1 33.1 L367.8 33.5 L369.5 35.3 L371.1 36.5 L372.8 36.4 L374.5 39.3 L376.1 42.6 L378.3 40.0" fill="none" stroke="#f0c23f" stroke-width="1.5"/><rect x="0" y="86.4" width="378.4" height="2.6" fill="#7ee77a"/></svg>
<div style="left:714.8px;top:343px;width:382.20000000000005px;height:6.100000000000023px;background:#242628;"></div>
<div class="t" style="left:719.2px;top:344.4px;width:60px;height:21.0px;line-height:21.0px;font-size:10.5px;color:#7d8d8d;text-align:left;font-weight:normal;">+15 dB</div>
<div class="t" style="left:719.2px;top:420.4px;width:60px;height:21.0px;line-height:21.0px;font-size:10.5px;color:#7d8d8d;text-align:left;font-weight:normal;">0 dB</div>
<div class="t" style="left:719.2px;top:507.8px;width:60px;height:21.0px;line-height:21.0px;font-size:10.5px;color:#7d8d8d;text-align:left;font-weight:normal;">-15 dB</div>
<div class="t" style="left:1034.0px;top:507.8px;width:60px;height:21.0px;line-height:21.0px;font-size:10.5px;color:#7d8d8d;text-align:right;font-weight:normal;">LOG</div>
<div class="t" style="left:762.5px;top:432.5px;width:40px;height:21.0px;line-height:21.0px;font-size:10.5px;color:#7d8d8d;text-align:right;font-weight:normal;">100</div>
<div class="t" style="left:1008.5px;top:432.5px;width:40px;height:21.0px;line-height:21.0px;font-size:10.5px;color:#7d8d8d;text-align:right;font-weight:normal;">10k</div>
<div class="t" style="left:1045.5px;top:432.5px;width:40px;height:21.0px;line-height:21.0px;font-size:10.5px;color:#7d8d8d;text-align:right;font-weight:normal;">20k</div>
<svg style="position:absolute;left:768px;top:373.5px;" width="14" height="15.5" viewBox="0 0 14 15.5"><path d="M0.3 0.3 L13.5 0.3 L6.9 15Z" fill="#e8e8e8"/></svg>
<svg style="position:absolute;left:874px;top:348px;" width="16" height="18" viewBox="0 0 16 18"><path d="M0.5 0.5 L15.5 0.5 L8 17Z" fill="#2a2c2e"/></svg>
<svg style="position:absolute;left:792px;top:425.8px;" width="22" height="22.0" viewBox="0 0 22 22.0"><circle cx="11" cy="11" r="9.8" fill="#2aa1cd" stroke="#161718" stroke-width="2.2"/><text x="11" y="15" font-family="Liberation Sans" font-weight="bold" font-size="11" text-anchor="middle" fill="#ffffff">1</text></svg>
<svg style="position:absolute;left:963.2px;top:425.8px;" width="22.0" height="22.0" viewBox="0 0 22.0 22.0"><circle cx="11" cy="11" r="9.8" fill="#2aa1cd" stroke="#161718" stroke-width="2.2"/><text x="11" y="15" font-family="Liberation Sans" font-weight="bold" font-size="11" text-anchor="middle" fill="#ffffff">2</text></svg>
<svg style="position:absolute;left:1010.1px;top:425.8px;" width="21.999999999999886" height="22.0" viewBox="0 0 21.999999999999886 22.0"><circle cx="11" cy="11" r="9.8" fill="#2aa1cd" stroke="#161718" stroke-width="2.2"/><text x="11" y="15" font-family="Liberation Sans" font-weight="bold" font-size="11" text-anchor="middle" fill="#ffffff">3</text></svg>
<div style="left:716.3px;top:523.8px;width:380.70000000000005px;height:4.900000000000091px;background:#242628;"></div>
<div style="left:716.9px;top:528.7px;width:378.4px;height:175.29999999999995px;background:#000;"></div>
<svg style="position:absolute;left:716.9px;top:528.7px;" width="378.4" height="175.29999999999995" viewBox="0 0 378.4 175.29999999999995"><path d="M110.89999999999998 0 L122.5 104.09999999999991" stroke="#cfcfcf" stroke-width="0.9"/><path d="M122.5 104.09999999999991 L187.5 70.59999999999991" stroke="#8a8a8a" stroke-width="0.8"/><path d="M122.5 104.09999999999991 L293.1 136.69999999999993" stroke="#bdbdbd" stroke-width="0.9"/><path d="M125.1 104.6 l0 -3" stroke="#bdbdbd" stroke-width="0.8"/><path d="M128.1 105.2 l0 -3" stroke="#bdbdbd" stroke-width="0.8"/><path d="M131.1 105.7 l0 -3" stroke="#bdbdbd" stroke-width="0.8"/><path d="M134.1 106.3 l0 -3" stroke="#bdbdbd" stroke-width="0.8"/><path d="M137.1 106.9 l0 -3" stroke="#bdbdbd" stroke-width="0.8"/><path d="M140.1 107.5 l0 -3" stroke="#bdbdbd" stroke-width="0.8"/><path d="M143.1 108.0 l0 -3" stroke="#bdbdbd" stroke-width="0.8"/><path d="M146.1 108.6 l0 -3" stroke="#bdbdbd" stroke-width="0.8"/><path d="M149.1 109.2 l0 -3" stroke="#bdbdbd" stroke-width="0.8"/><path d="M152.1 109.8 l0 -3" stroke="#bdbdbd" stroke-width="0.8"/><path d="M155.1 110.3 l0 -3" stroke="#bdbdbd" stroke-width="0.8"/><path d="M171.1 113.4 l0 -3" stroke="#bdbdbd" stroke-width="0.8"/><path d="M188.1 116.6 l0 -3" stroke="#bdbdbd" stroke-width="0.8"/><path d="M203.1 119.5 l0 -3" stroke="#bdbdbd" stroke-width="0.8"/><path d="M216.1 122.0 l0 -3" stroke="#bdbdbd" stroke-width="0.8"/><path d="M226.1 123.9 l0 -3" stroke="#bdbdbd" stroke-width="0.8"/><path d="M234.1 125.4 l0 -3" stroke="#bdbdbd" stroke-width="0.8"/><path d="M241.1 126.8 l0 -3" stroke="#bdbdbd" stroke-width="0.8"/><path d="M247.1 127.9 l0 -3" stroke="#bdbdbd" stroke-width="0.8"/><path d="M253.1 129.0 l0 -3" stroke="#bdbdbd" stroke-width="0.8"/><path d="M258.1 130.0 l0 -3" stroke="#bdbdbd" stroke-width="0.8"/><defs><clipPath id="ysurf"><polygon points="122.8,73.2 125.1,72.5 127.5,69.2 129.8,68.9 132.2,65.6 134.5,65.2 136.8,62.9 139.2,61.3 141.5,58.0 143.8,57.7 146.2,54.3 148.5,53.7 150.9,51.2 153.2,48.9 155.4,50.5 157.7,46.7 159.9,48.9 162.1,47.6 164.3,48.6 166.6,43.7 168.8,48.6 171.0,46.4 173.3,47.9 175.5,45.8 177.7,46.9 179.9,45.1 182.2,45.3 184.4,41.0 186.6,44.9 188.9,43.2 191.1,45.3 193.3,39.6 195.5,43.6 197.8,38.4 200.0,40.0 202.5,43.1 205.1,40.9 207.6,43.0 210.1,38.2 212.7,42.4 215.2,36.7 217.5,41.4 219.9,39.6 222.2,41.7 224.6,41.1 226.9,42.1 229.3,40.9 231.6,43.5 234.0,42.8 236.3,44.1 238.7,41.8 241.0,42.2 243.9,45.7 246.8,43.2 249.7,46.3 249.7,66.3 230.4,89.8 230.4,63.5 200.0,62.3 164.9,65.2 122.8,74.8"/></clipPath></defs><polygon points="122.8,73.2 125.1,72.5 127.5,69.2 129.8,68.9 132.2,65.6 134.5,65.2 136.8,62.9 139.2,61.3 141.5,58.0 143.8,57.7 146.2,54.3 148.5,53.7 150.9,51.2 153.2,48.9 155.4,50.5 157.7,46.7 159.9,48.9 162.1,47.6 164.3,48.6 166.6,43.7 168.8,48.6 171.0,46.4 173.3,47.9 175.5,45.8 177.7,46.9 179.9,45.1 182.2,45.3 184.4,41.0 186.6,44.9 188.9,43.2 191.1,45.3 193.3,39.6 195.5,43.6 197.8,38.4 200.0,40.0 202.5,43.1 205.1,40.9 207.6,43.0 210.1,38.2 212.7,42.4 215.2,36.7 217.5,41.4 219.9,39.6 222.2,41.7 224.6,41.1 226.9,42.1 229.3,40.9 231.6,43.5 234.0,42.8 236.3,44.1 238.7,41.8 241.0,42.2 243.9,45.7 246.8,43.2 249.7,46.3 249.7,66.3 230.4,89.8 230.4,63.5 200.0,62.3 164.9,65.2 122.8,74.8" fill="#f4ea1c"/><g clip-path="url(#ysurf)"><polygon points="189.9,51.6 197.2,49.9 198.2,52.6 190.9,53.3" fill="#fffbc0" opacity="0.85"/><polygon points="243.8,43.4 249.2,40.3 250.2,44.4 244.8,46.6" fill="#e8e4c0" opacity="0.85"/><polygon points="194.2,52.5 197.3,50.8 198.3,53.5 195.2,54.1" fill="#fff8a0" opacity="0.85"/><polygon points="216.1,55.1 219.8,52.9 220.8,56.1 217.1,57.3" fill="#e8e4c0" opacity="0.85"/><polygon points="192.4,49.6 198.5,45.7 199.5,50.6 193.4,53.4" fill="#fffbc0" opacity="0.85"/><polygon points="213.2,53.0 218.4,50.6 219.4,54.0 214.2,55.4" fill="#e8e4c0" opacity="0.85"/><polygon points="243.5,39.7 248.5,36.4 249.5,40.7 244.5,43.1" fill="#fff8a0" opacity="0.85"/><polygon points="192.0,57.6 198.3,55.1 199.3,58.6 193.0,60.0" fill="#f8f4d8" opacity="0.85"/><polygon points="189.1,56.2 195.9,52.5 196.9,57.2 190.1,59.8" fill="#f8f4d8" opacity="0.85"/><polygon points="247.8,40.2 251.1,35.7 252.1,41.2 248.8,44.7" fill="#fffde8" opacity="0.85"/><polygon points="241.6,39.1 249.0,36.6 250.0,40.1 242.6,41.7" fill="#f8f4d8" opacity="0.85"/><polygon points="201.8,49.4 205.2,45.1 206.2,50.4 202.8,53.6" fill="#fffbc0" opacity="0.85"/><polygon points="231.2,44.6 235.5,40.2 236.5,45.6 232.2,49.0" fill="#fffde8" opacity="0.85"/><polygon points="243.8,47.2 251.6,45.4 252.6,48.2 244.8,49.1" fill="#e8e4c0" opacity="0.85"/><polygon points="194.8,45.1 200.3,43.2 201.3,46.1 195.8,47.0" fill="#fffde8" opacity="0.85"/><polygon points="235.5,53.1 241.3,50.1 242.3,54.1 236.5,56.0" fill="#f8f4d8" opacity="0.85"/><polygon points="203.8,47.3 209.2,45.3 210.2,48.3 204.8,49.2" fill="#e8e4c0" opacity="0.85"/><polygon points="233.0,47.2 237.1,42.8 238.1,48.2 234.0,51.5" fill="#f8f4d8" opacity="0.85"/><polygon points="178.4,53.1 184.5,50.0 185.5,54.1 179.4,56.3" fill="#fffde8" opacity="0.85"/><polygon points="193.8,55.4 201.5,51.8 202.5,56.4 194.8,59.0" fill="#fffbc0" opacity="0.85"/><polygon points="227.7,45.4 234.9,43.1 235.9,46.4 228.7,47.8" fill="#e8e4c0" opacity="0.85"/><polygon points="185.6,59.1 192.9,54.8 193.9,60.1 186.6,63.5" fill="#f8f4d8" opacity="0.85"/><polygon points="218.3,49.6 221.4,46.5 222.4,50.6 219.3,52.7" fill="#f8f4d8" opacity="0.85"/><polygon points="190.8,48.6 195.5,45.6 196.5,49.6 191.8,51.6" fill="#f8f4d8" opacity="0.85"/><polygon points="192.7,53.6 200.1,49.6 201.1,54.6 193.7,57.6" fill="#f8f4d8" opacity="0.85"/><polygon points="241.5,41.1 249.7,38.3 250.7,42.1 242.5,44.0" fill="#f8f4d8" opacity="0.85"/><polygon points="244.4,45.6 250.6,43.6 251.6,46.6 245.4,47.6" fill="#f8f4d8" opacity="0.85"/><polygon points="242.8,45.2 249.9,41.6 250.9,46.2 243.8,48.9" fill="#e8e4c0" opacity="0.85"/><polygon points="177.7,57.3 184.2,53.8 185.2,58.3 178.7,60.8" fill="#e8e4c0" opacity="0.85"/><polygon points="188.8,52.8 197.0,50.4 198.0,53.8 189.8,55.1" fill="#fffbc0" opacity="0.85"/><polygon points="179.7,54.3 186.5,52.3 187.5,55.3 180.7,56.4" fill="#fff8a0" opacity="0.85"/><polygon points="216.7,42.3 222.6,40.1 223.6,43.3 217.7,44.4" fill="#fffbc0" opacity="0.85"/><polygon points="238.9,40.6 247.7,37.6 248.7,41.6 239.9,43.5" fill="#fffde8" opacity="0.85"/><polygon points="166.1,54.3 171.4,50.9 172.4,55.3 167.1,57.6" fill="#fffde8" opacity="0.85"/><polygon points="180.5,56.1 185.7,53.5 186.7,57.1 181.5,58.6" fill="#f8f4d8" opacity="0.85"/><polygon points="235.8,51.5 243.0,48.4 244.0,52.5 236.8,54.6" fill="#fffbc0" opacity="0.85"/><polygon points="209.8,46.7 214.6,43.7 215.6,47.7 210.8,49.7" fill="#fffde8" opacity="0.85"/><polygon points="188.0,50.0 191.8,47.3 192.8,51.0 189.0,52.8" fill="#fffde8" opacity="0.85"/><polygon points="217.7,46.7 221.5,43.4 222.5,47.7 218.7,50.0" fill="#fffde8" opacity="0.85"/><polygon points="203.6,46.0 207.4,44.2 208.4,47.0 204.6,47.8" fill="#fffbc0" opacity="0.85"/><polygon points="195.6,48.8 204.1,45.7 205.1,49.8 196.6,51.9" fill="#f8f4d8" opacity="0.85"/><polygon points="216.6,54.2 221.9,51.4 222.9,55.2 217.6,57.0" fill="#fff8a0" opacity="0.85"/><polygon points="205.0,49.8 212.3,47.1 213.3,50.8 206.0,52.4" fill="#fff8a0" opacity="0.85"/><polygon points="213.7,45.7 222.6,42.7 223.6,46.7 214.7,48.6" fill="#e8e4c0" opacity="0.85"/><polygon points="164.8,61.1 169.6,56.8 170.6,62.1 165.8,65.4" fill="#fff8a0" opacity="0.85"/><polygon points="203.6,44.9 210.4,42.1 211.4,45.9 204.6,47.8" fill="#f8f4d8" opacity="0.85"/><polygon points="166.5,49.6 171.9,46.7 172.9,50.6 167.5,52.5" fill="#fffde8" opacity="0.85"/><polygon points="186.4,58.4 194.1,56.2 195.1,59.4 187.4,60.6" fill="#f8f4d8" opacity="0.85"/><polygon points="234.8,49.6 239.5,46.6 240.5,50.6 235.8,52.6" fill="#e8e4c0" opacity="0.85"/><polygon points="207.1,54.9 215.4,50.7 216.4,55.9 208.1,59.1" fill="#fffbc0" opacity="0.85"/><polygon points="227.7,44.6 233.9,42.0 234.9,45.6 228.7,47.1" fill="#f8f4d8" opacity="0.85"/><polygon points="225.3,41.0 230.4,37.5 231.4,42.0 226.3,44.6" fill="#fffde8" opacity="0.85"/><polygon points="174.4,46.8 180.7,43.2 181.7,47.8 175.4,50.3" fill="#fffbc0" opacity="0.85"/><polygon points="238.6,46.7 241.7,42.8 242.7,47.7 239.6,50.5" fill="#e8e4c0" opacity="0.85"/><polygon points="213.7,51.7 222.4,48.2 223.4,52.7 214.7,55.1" fill="#e8e4c0" opacity="0.85"/><polygon points="203.5,52.8 210.9,48.6 211.9,53.8 204.5,57.0" fill="#e8e4c0" opacity="0.85"/><polygon points="233.7,40.6 241.7,37.0 242.7,41.6 234.7,44.1" fill="#e8e4c0" opacity="0.85"/><polygon points="212.6,51.2 218.4,48.8 219.4,52.2 213.6,53.7" fill="#fff8a0" opacity="0.85"/><polygon points="203.8,50.9 209.8,48.4 210.8,51.9 204.8,53.4" fill="#fff8a0" opacity="0.85"/><polygon points="199.3,51.3 202.6,47.6 203.6,52.3 200.3,55.0" fill="#f8f4d8" opacity="0.85"/><polygon points="232.8,50.8 239.7,49.2 240.7,51.8 233.8,52.4" fill="#e8e4c0" opacity="0.85"/><polygon points="246.3,52.1 253.5,50.4 254.5,53.1 247.3,53.7" fill="#fffbc0" opacity="0.85"/><polygon points="181.7,54.9 190.4,51.3 191.4,55.9 182.7,58.5" fill="#fff8a0" opacity="0.85"/><polygon points="247.6,47.8 253.2,45.8 254.2,48.8 248.6,49.9" fill="#fff8a0" opacity="0.85"/><polygon points="198.3,46.1 205.0,44.5 206.0,47.1 199.3,47.8" fill="#fffbc0" opacity="0.85"/><polygon points="219.2,51.8 223.9,48.6 224.9,52.8 220.2,55.0" fill="#fffbc0" opacity="0.85"/><polygon points="226.2,52.8 230.0,50.0 231.0,53.8 227.2,55.6" fill="#f8f4d8" opacity="0.85"/><polygon points="221.4,48.0 226.5,44.5 227.5,49.0 222.4,51.4" fill="#fffbc0" opacity="0.85"/><polygon points="174.8,50.8 181.3,47.3 182.3,51.8 175.8,54.4" fill="#f8f4d8" opacity="0.85"/><polygon points="240.5,46.6 247.2,44.3 248.2,47.6 241.5,48.9" fill="#fffde8" opacity="0.85"/><rect x="142.5" y="68.2" width="3.1" height="3.0" fill="#ffff60" opacity="0.8"/><rect x="165.4" y="57.0" width="3.8" height="1.8" fill="#ffff60" opacity="0.8"/><rect x="138.3" y="63.8" width="3.4" height="2.1" fill="#ffff60" opacity="0.8"/><rect x="134.5" y="72.5" width="4.0" height="1.9" fill="#ffff60" opacity="0.8"/><rect x="148.7" y="62.2" width="5.9" height="1.2" fill="#ffff60" opacity="0.8"/><rect x="154.3" y="60.0" width="3.5" height="2.7" fill="#ffff60" opacity="0.8"/><rect x="170.9" y="50.8" width="5.2" height="2.5" fill="#ffff60" opacity="0.8"/><rect x="136.5" y="71.9" width="4.0" height="1.4" fill="#ffff60" opacity="0.8"/><rect x="161.2" y="55.3" width="5.3" height="1.6" fill="#ffff60" opacity="0.8"/><rect x="170.3" y="53.3" width="5.2" height="1.8" fill="#ffff60" opacity="0.8"/><rect x="162.0" y="54.7" width="3.2" height="2.3" fill="#ffff60" opacity="0.8"/><rect x="171.5" y="50.0" width="2.1" height="3.0" fill="#ffff60" opacity="0.8"/><rect x="141.7" y="63.4" width="2.3" height="1.1" fill="#ffff60" opacity="0.8"/><rect x="140.6" y="64.1" width="4.0" height="2.9" fill="#ffff60" opacity="0.8"/><rect x="159.5" y="55.9" width="3.7" height="1.6" fill="#ffff60" opacity="0.8"/><rect x="170.5" y="55.0" width="3.3" height="1.9" fill="#ffff60" opacity="0.8"/><rect x="140.8" y="67.7" width="2.3" height="2.7" fill="#ffff60" opacity="0.8"/><rect x="167.9" y="52.7" width="4.2" height="1.2" fill="#ffff60" opacity="0.8"/><rect x="165.8" y="55.9" width="4.7" height="1.1" fill="#ffff60" opacity="0.8"/><rect x="169.0" y="51.1" width="5.0" height="1.6" fill="#ffff60" opacity="0.8"/><rect x="135.5" y="65.3" width="3.8" height="2.7" fill="#ffff60" opacity="0.8"/><rect x="139.3" y="69.5" width="3.3" height="1.9" fill="#ffff60" opacity="0.8"/><rect x="142.7" y="69.4" width="2.1" height="2.4" fill="#ffff60" opacity="0.8"/><rect x="156.1" y="60.1" width="4.5" height="2.8" fill="#ffff60" opacity="0.8"/><rect x="161.4" y="57.6" width="2.7" height="1.7" fill="#ffff60" opacity="0.8"/></g><polygon points="230.39999999999998,63.5 249.70000000000005,46.299999999999955 249.70000000000005,66.29999999999995 230.39999999999998,89.79999999999995" fill="#d4c812"/><polygon points="230.39999999999998,89.79999999999995 249.70000000000005,66.29999999999995 249.70000000000005,74.59999999999991 243.89999999999998,116.69999999999993 230.39999999999998,112.0" fill="#560a05"/><polygon points="249.70000000000005,74.59999999999991 256.1,74.59999999999991 243.89999999999998,116.69999999999993 230.39999999999998,112.0 238.10000000000002,93.29999999999995" fill="#9c1a0a"/><polygon points="122.5,122.0 169.70000000000005,130.29999999999995 169.70000000000005,141.29999999999995 122.5,128.79999999999995" fill="#7a0d0a"/><polygon points="169.70000000000005,130.29999999999995 176.60000000000002,131.5999999999999 176.60000000000002,142.5999999999999 169.70000000000005,141.29999999999995" fill="#c8c8c8"/><polygon points="176.60000000000002,131.5999999999999 239.0,146.0999999999999 239.0,157.5999999999999 176.60000000000002,142.5999999999999" fill="#0b5e0b"/></svg>
<div style="left:716.3px;top:704px;width:380.70000000000005px;height:45px;background:#3b3d3e;"></div>
<div style="left:723.5px;top:710.9px;width:192.5px;height:31.100000000000023px;background:#1e1f22;"></div>
<div class="t" style="left:748.8px;top:713.5px;width:80px;height:26px;line-height:26px;font-size:13px;color:#c8c8c8;text-align:center;font-weight:normal;">Flat EQ</div>
<svg style="position:absolute;left:862px;top:719px;" width="15" height="15" viewBox="0 0 15 15"><g fill="none" stroke="#c8c8c8" stroke-width="1.3"><path d="M1.5 1.5 L11 1.5 L13.5 4 L13.5 13.5 L1.5 13.5Z"/><path d="M4 1.5 L4 5.5 L10.5 5.5 L10.5 1.5"/><path d="M4 13.5 L4 9 L11 9 L11 13.5"/></g></svg>
<svg style="position:absolute;left:894px;top:718px;" width="16" height="17" viewBox="0 0 16 17"><g fill="none" stroke="#c8c8c8" stroke-width="1.2"><path d="M1.5 3.8 L14.5 3.8"/><path d="M5.5 3.8 L6 1.5 L10 1.5 L10.5 3.8"/><path d="M3 3.8 L4.2 15.5 L11.8 15.5 L13 3.8"/><path d="M6.3 6.5 L6.5 13.5 M8 6.5 L8 13.5 M9.7 6.5 L9.5 13.5"/></g></svg>
<div style="left:978px;top:711.5px;width:30px;height:29.899999999999977px;background:#555758;border:1px solid #2e3031;border-radius:3px;"></div>
<div style="left:1018px;top:711.5px;width:30px;height:29.899999999999977px;background:#555758;border:1px solid #2e3031;border-radius:3px;"></div>
<div style="left:1058px;top:711.5px;width:30px;height:29.899999999999977px;background:#555758;border:1px solid #2e3031;border-radius:3px;"></div>
<svg style="position:absolute;left:982px;top:715px;" width="22" height="22" viewBox="0 0 22 22"><g fill="none" stroke="#9c9c9c" stroke-width="1.8"><circle cx="11" cy="11" r="8.6"/><path d="M4.5 5 L17.5 17"/><path d="M6 14.5 L10.5 8.5 L12.8 11 L14.2 9.5 L16.5 12.5"/></g></svg>
<div class="t" style="left:1018.0px;top:711.5px;width:30px;height:30px;line-height:30px;font-size:15px;color:#8c8c8c;text-align:center;font-weight:normal;">ØL</div>
<div class="t" style="left:1058.0px;top:711.5px;width:30px;height:30px;line-height:30px;font-size:15px;color:#8c8c8c;text-align:center;font-weight:normal;">ØR</div>
<div style="left:1097px;top:118px;width:2.5px;height:633px;background:#262728;"></div>
<div style="left:1099.5px;top:118px;width:155.5px;height:633px;background:#3a3c3d;"></div>
<div style="left:1108.8px;top:128.2px;width:138.60000000000014px;height:21.5px;background:#4b4d4e;border:1px solid #353738;border-radius:3px;"></div>
<svg style="position:absolute;left:1168px;top:136px;" width="20" height="7" viewBox="0 0 20 7"><g fill="#e8e8e8"><circle cx="4.5" cy="3.5" r="1.7"/><circle cx="10" cy="3.5" r="1.7"/><circle cx="15.5" cy="3.5" r="1.7"/></g></svg>
<div style="left:1108.8px;top:156.1px;width:137.20000000000005px;height:22.30000000000001px;background:#cc1f0a;"></div>
<div style="left:1177.3px;top:156.1px;width:1.400000000000091px;height:22.30000000000001px;background:#3a3c3d;"></div>
<div class="t" style="left:1123.0px;top:159.8px;width:40px;height:15.0px;line-height:15.0px;font-size:7.5px;color:#f4f4f4;text-align:center;font-weight:normal;">+1.5</div>
<div class="t" style="left:1192.5px;top:159.8px;width:40px;height:15.0px;line-height:15.0px;font-size:7.5px;color:#f4f4f4;text-align:center;font-weight:normal;">+1.7</div>
<div style="left:1108.5px;top:178.4px;width:137.5px;height:533.0px;background:#222425;"></div>
<div style="left:1108.5px;top:191.3px;width:68.79999999999995px;height:520.0999999999999px;background:#8ef98e;"></div>
<div style="left:1178.7px;top:190.4px;width:67.29999999999995px;height:521.0px;background:#8ef98e;"></div>
<div style="left:1178.7px;top:185px;width:67.29999999999995px;height:2.5999999999999943px;background:#8ef98e;"></div>
<div style="left:1177.3px;top:185px;width:1.400000000000091px;height:526.4px;background:#2a3a2b;"></div>
<div style="left:1108.5px;top:208.9px;width:4.5px;height:1.3999999999999773px;background:#5f6e60;"></div>
<div style="left:1172.8px;top:208.9px;width:4.5px;height:1.3999999999999773px;background:#5f6e60;"></div>
<div class="t" style="left:1140.8px;top:201.6px;width:30px;height:16px;line-height:16px;font-size:8px;color:#5f6e60;text-align:right;font-weight:normal;">-3</div>
<div style="left:1178.7px;top:208.9px;width:4.5px;height:1.3999999999999773px;background:#5f6e60;"></div>
<div style="left:1241.5px;top:208.9px;width:4.5px;height:1.3999999999999773px;background:#5f6e60;"></div>
<div class="t" style="left:1209.5px;top:201.6px;width:30px;height:16px;line-height:16px;font-size:8px;color:#5f6e60;text-align:right;font-weight:normal;">-3</div>
<div style="left:1108.5px;top:262.0px;width:4.5px;height:1.3999999999999773px;background:#5f6e60;"></div>
<div style="left:1172.8px;top:262.0px;width:4.5px;height:1.3999999999999773px;background:#5f6e60;"></div>
<div class="t" style="left:1140.8px;top:254.7px;width:30px;height:16px;line-height:16px;font-size:8px;color:#5f6e60;text-align:right;font-weight:normal;">-9</div>
<div style="left:1178.7px;top:262.0px;width:4.5px;height:1.3999999999999773px;background:#5f6e60;"></div>
<div style="left:1241.5px;top:262.0px;width:4.5px;height:1.3999999999999773px;background:#5f6e60;"></div>
<div class="t" style="left:1209.5px;top:254.7px;width:30px;height:16px;line-height:16px;font-size:8px;color:#5f6e60;text-align:right;font-weight:normal;">-9</div>
<div style="left:1108.5px;top:315.1px;width:4.5px;height:1.3999999999999773px;background:#5f6e60;"></div>
<div style="left:1172.8px;top:315.1px;width:4.5px;height:1.3999999999999773px;background:#5f6e60;"></div>
<div class="t" style="left:1140.8px;top:307.8px;width:30px;height:16px;line-height:16px;font-size:8px;color:#5f6e60;text-align:right;font-weight:normal;">-15</div>
<div style="left:1178.7px;top:315.1px;width:4.5px;height:1.3999999999999773px;background:#5f6e60;"></div>
<div style="left:1241.5px;top:315.1px;width:4.5px;height:1.3999999999999773px;background:#5f6e60;"></div>
<div class="t" style="left:1209.5px;top:307.8px;width:30px;height:16px;line-height:16px;font-size:8px;color:#5f6e60;text-align:right;font-weight:normal;">-15</div>
<div style="left:1108.5px;top:368.2px;width:4.5px;height:1.3999999999999773px;background:#5f6e60;"></div>
<div style="left:1172.8px;top:368.2px;width:4.5px;height:1.3999999999999773px;background:#5f6e60;"></div>
<div class="t" style="left:1140.8px;top:360.9px;width:30px;height:16px;line-height:16px;font-size:8px;color:#5f6e60;text-align:right;font-weight:normal;">-21</div>
<div style="left:1178.7px;top:368.2px;width:4.5px;height:1.3999999999999773px;background:#5f6e60;"></div>
<div style="left:1241.5px;top:368.2px;width:4.5px;height:1.3999999999999773px;background:#5f6e60;"></div>
<div class="t" style="left:1209.5px;top:360.9px;width:30px;height:16px;line-height:16px;font-size:8px;color:#5f6e60;text-align:right;font-weight:normal;">-21</div>
<div style="left:1108.5px;top:421.3px;width:4.5px;height:1.3999999999999773px;background:#5f6e60;"></div>
<div style="left:1172.8px;top:421.3px;width:4.5px;height:1.3999999999999773px;background:#5f6e60;"></div>
<div class="t" style="left:1140.8px;top:414.0px;width:30px;height:16px;line-height:16px;font-size:8px;color:#5f6e60;text-align:right;font-weight:normal;">-27</div>
<div style="left:1178.7px;top:421.3px;width:4.5px;height:1.3999999999999773px;background:#5f6e60;"></div>
<div style="left:1241.5px;top:421.3px;width:4.5px;height:1.3999999999999773px;background:#5f6e60;"></div>
<div class="t" style="left:1209.5px;top:414.0px;width:30px;height:16px;line-height:16px;font-size:8px;color:#5f6e60;text-align:right;font-weight:normal;">-27</div>
<div style="left:1108.5px;top:474.40000000000003px;width:4.5px;height:1.3999999999999773px;background:#5f6e60;"></div>
<div style="left:1172.8px;top:474.40000000000003px;width:4.5px;height:1.3999999999999773px;background:#5f6e60;"></div>
<div class="t" style="left:1140.8px;top:467.1px;width:30px;height:16px;line-height:16px;font-size:8px;color:#5f6e60;text-align:right;font-weight:normal;">-33</div>
<div style="left:1178.7px;top:474.40000000000003px;width:4.5px;height:1.3999999999999773px;background:#5f6e60;"></div>
<div style="left:1241.5px;top:474.40000000000003px;width:4.5px;height:1.3999999999999773px;background:#5f6e60;"></div>
<div class="t" style="left:1209.5px;top:467.1px;width:30px;height:16px;line-height:16px;font-size:8px;color:#5f6e60;text-align:right;font-weight:normal;">-33</div>
<div style="left:1108.5px;top:527.5px;width:4.5px;height:1.400000000000091px;background:#5f6e60;"></div>
<div style="left:1172.8px;top:527.5px;width:4.5px;height:1.400000000000091px;background:#5f6e60;"></div>
<div class="t" style="left:1140.8px;top:520.2px;width:30px;height:16px;line-height:16px;font-size:8px;color:#5f6e60;text-align:right;font-weight:normal;">-39</div>
<div style="left:1178.7px;top:527.5px;width:4.5px;height:1.400000000000091px;background:#5f6e60;"></div>
<div style="left:1241.5px;top:527.5px;width:4.5px;height:1.400000000000091px;background:#5f6e60;"></div>
<div class="t" style="left:1209.5px;top:520.2px;width:30px;height:16px;line-height:16px;font-size:8px;color:#5f6e60;text-align:right;font-weight:normal;">-39</div>
<div style="left:1108.5px;top:580.5999999999999px;width:4.5px;height:1.400000000000091px;background:#5f6e60;"></div>
<div style="left:1172.8px;top:580.5999999999999px;width:4.5px;height:1.400000000000091px;background:#5f6e60;"></div>
<div class="t" style="left:1140.8px;top:573.3px;width:30px;height:16px;line-height:16px;font-size:8px;color:#5f6e60;text-align:right;font-weight:normal;">-45</div>
<div style="left:1178.7px;top:580.5999999999999px;width:4.5px;height:1.400000000000091px;background:#5f6e60;"></div>
<div style="left:1241.5px;top:580.5999999999999px;width:4.5px;height:1.400000000000091px;background:#5f6e60;"></div>
<div class="t" style="left:1209.5px;top:573.3px;width:30px;height:16px;line-height:16px;font-size:8px;color:#5f6e60;text-align:right;font-weight:normal;">-45</div>
<div style="left:1108.5px;top:633.6999999999999px;width:4.5px;height:1.400000000000091px;background:#5f6e60;"></div>
<div style="left:1172.8px;top:633.6999999999999px;width:4.5px;height:1.400000000000091px;background:#5f6e60;"></div>
<div class="t" style="left:1140.8px;top:626.4px;width:30px;height:16px;line-height:16px;font-size:8px;color:#5f6e60;text-align:right;font-weight:normal;">-51</div>
<div style="left:1178.7px;top:633.6999999999999px;width:4.5px;height:1.400000000000091px;background:#5f6e60;"></div>
<div style="left:1241.5px;top:633.6999999999999px;width:4.5px;height:1.400000000000091px;background:#5f6e60;"></div>
<div class="t" style="left:1209.5px;top:626.4px;width:30px;height:16px;line-height:16px;font-size:8px;color:#5f6e60;text-align:right;font-weight:normal;">-51</div>
<div style="left:1108.5px;top:686.8px;width:4.5px;height:1.400000000000091px;background:#5f6e60;"></div>
<div style="left:1172.8px;top:686.8px;width:4.5px;height:1.400000000000091px;background:#5f6e60;"></div>
<div class="t" style="left:1140.8px;top:679.5px;width:30px;height:16px;line-height:16px;font-size:8px;color:#5f6e60;text-align:right;font-weight:normal;">-57</div>
<div style="left:1178.7px;top:686.8px;width:4.5px;height:1.400000000000091px;background:#5f6e60;"></div>
<div style="left:1241.5px;top:686.8px;width:4.5px;height:1.400000000000091px;background:#5f6e60;"></div>
<div class="t" style="left:1209.5px;top:679.5px;width:30px;height:16px;line-height:16px;font-size:8px;color:#5f6e60;text-align:right;font-weight:normal;">-57</div>
<div class="t" style="left:1123.0px;top:699.5px;width:40px;height:18px;line-height:18px;font-size:9px;color:#6f8a70;text-align:center;font-weight:normal;">Peak</div>
<div class="t" style="left:1192.0px;top:699.5px;width:40px;height:18px;line-height:18px;font-size:9px;color:#6f8a70;text-align:center;font-weight:normal;">Peak</div>
<div style="left:1108.5px;top:717.7px;width:138.0px;height:21.299999999999955px;background:#2e3031;border:1px solid #555758;border-radius:3px;"></div>
<div style="left:1195px;top:717.7px;width:1.2000000000000455px;height:21.299999999999955px;background:#555758;"></div>
<div style="left:1224px;top:717.7px;width:1.2000000000000455px;height:21.299999999999955px;background:#555758;"></div>
<div class="t" style="left:1119.4px;top:718.4px;width:60px;height:20px;line-height:20px;font-size:10px;color:#f0f0f0;text-align:center;font-weight:bold;">峰值</div>
<svg style="position:absolute;left:1203px;top:721px;" width="14" height="14" viewBox="0 0 14 14"><polygon points="12.68,5.85 12.80,6.98 11.10,7.80 10.86,8.58 11.83,10.20 11.12,11.09 9.33,10.46 8.61,10.85 8.15,12.68 7.02,12.80 6.20,11.10 5.42,10.86 3.80,11.83 2.91,11.12 3.54,9.33 3.15,8.61 1.32,8.15 1.20,7.02 2.90,6.20 3.14,5.42 2.17,3.80 2.88,2.91 4.67,3.54 5.39,3.15 5.85,1.32 6.98,1.20 7.80,2.90 8.58,3.14 10.20,2.17 11.09,2.88 10.46,4.67 10.85,5.39" fill="#f0f0f0"/><circle cx="7" cy="7" r="1.97" fill="#2e3031"/></svg>
<div class="t" style="left:1215.6px;top:718.4px;width:40px;height:20px;line-height:20px;font-size:10px;color:#f0f0f0;text-align:center;font-weight:bold;">扫描</div>
<div style="left:27px;top:751px;width:1228px;height:1.5px;background:#232425;"></div>
<div style="left:27px;top:752.5px;width:1228px;height:64.5px;background:#3d3e40;border-radius:0 0 3px 3px;"></div>
<div style="left:37px;top:764px;width:365px;height:42.200000000000045px;background:#4a4b4d;"></div>
<div style="left:97.30000000000001px;top:764px;width:1.1999999999999886px;height:42.200000000000045px;background:#3a3b3d;"></div>
<div style="left:157.9px;top:764px;width:1.1999999999999886px;height:42.200000000000045px;background:#3a3b3d;"></div>
<div style="left:218.6px;top:764px;width:1.1999999999999886px;height:42.200000000000045px;background:#3a3b3d;"></div>
<div style="left:279.59999999999997px;top:764px;width:1.2000000000000455px;height:42.200000000000045px;background:#3a3b3d;"></div>
<div style="left:340.9px;top:764px;width:1.2000000000000455px;height:42.200000000000045px;background:#3a3b3d;"></div>
<div style="left:97.9px;top:764px;width:60.29999999999998px;height:42.200000000000045px;background:#5bbf6a;"></div>
<div style="left:58.4px;top:776.4px;width:18.000000000000007px;height:18.0px;background:#c9d5d9;border-radius:50%;"></div>
<svg style="position:absolute;left:119px;top:775px;" width="22" height="22" viewBox="0 0 22 22"><path d="M1.5 1 L20.2 10.4 L1.5 20.6Z" fill="#0a0a0a"/></svg>
<svg style="position:absolute;left:177px;top:774px;" width="27" height="24" viewBox="0 0 27 24"><g fill="#c9d5d9"><path d="M2.5 12 L13 2.5 L13 21.5Z"/><path d="M11.5 12 L22 2.5 L22 21.5Z"/><rect x="22" y="2.5" width="3" height="19"/></g></svg>
<div style="left:240.9px;top:776.2px;width:19.299999999999983px;height:18.699999999999932px;background:#c9d5d9;"></div>
<svg style="position:absolute;left:298px;top:773px;" width="27" height="25" viewBox="0 0 27 25"><g fill="none" stroke="#c9d5d9" stroke-width="3.6"><path d="M4 14 L4 10.5 Q4 7 7.5 7 L20 7"/><path d="M23 11 L23 14.5 Q23 18 19.5 18 L7 18"/></g><path d="M18 1 L25 7 L18 13Z M9 12 L2 18 L9 24Z" fill="#c9d5d9"/></svg>
<div style="left:365px;top:769.6px;width:15px;height:15.0px;background:#c9d5d9;border-radius:50%;"></div>
<div class="t" style="left:343.0px;top:781.0px;width:60px;height:30px;line-height:30px;font-size:15px;color:#c9d5d9;text-align:center;font-weight:bold;"><span style="font-size:11px">1</span>234</div>
<div style="left:426.3px;top:760.2px;width:19.69999999999999px;height:50.39999999999998px;background:#262829;"></div>
<div class="t" style="left:430.2px;top:763.8px;width:12px;height:18px;line-height:18px;font-size:9px;color:#e6e6e6;text-align:center;font-weight:normal;">L</div>
<div class="t" style="left:430.2px;top:772.8px;width:12px;height:18px;line-height:18px;font-size:9px;color:#e6e6e6;text-align:center;font-weight:normal;">I</div>
<div class="t" style="left:430.2px;top:781.8px;width:12px;height:18px;line-height:18px;font-size:9px;color:#e6e6e6;text-align:center;font-weight:normal;">V</div>
<div class="t" style="left:430.2px;top:790.8px;width:12px;height:18px;line-height:18px;font-size:9px;color:#e6e6e6;text-align:center;font-weight:normal;">E</div>
<div style="left:447px;top:760.5px;width:178.60000000000002px;height:50.700000000000045px;background:#2e3031;"></div>
<div class="t" style="left:455.6px;top:759.5px;width:200px;height:52px;line-height:52px;font-size:26px;color:#e2e2e2;text-align:left;font-weight:normal;letter-spacing:2.85px;">144:3:256</div>
<div style="left:613.3px;top:780px;width:1.8000000000000682px;height:11.700000000000045px;background:#f22a10;"></div>
<div style="left:625.6px;top:760.5px;width:154.69999999999993px;height:50.700000000000045px;background:#2e3031;border-left:1px solid #3c3e3f;"></div>
<div style="left:704px;top:760.5px;width:1px;height:50.700000000000045px;background:#3c3e3f;"></div>
<div style="left:625.6px;top:787.6px;width:154.69999999999993px;height:1.0px;background:#3c3e3f;"></div>
<div class="t" style="left:643.7px;top:761.0px;width:40px;height:24px;line-height:24px;font-size:12px;color:#e6e6e6;text-align:center;font-weight:normal;">开始</div>
<div class="t" style="left:643.7px;top:788.6px;width:40px;height:24px;line-height:24px;font-size:12px;color:#e6e6e6;text-align:center;font-weight:normal;">结束</div>
<div class="t" style="left:706.6px;top:761.0px;width:70px;height:24px;line-height:24px;font-size:12px;color:#e6e6e6;text-align:center;font-weight:normal;">87:1:340</div>
<div class="t" style="left:706.6px;top:788.6px;width:70px;height:24px;line-height:24px;font-size:12px;color:#e6e6e6;text-align:center;font-weight:normal;">87:1:340</div>
<div style="left:780.3px;top:760.5px;width:111.10000000000002px;height:50.200000000000045px;background:#2e3031;"></div>
<div class="t" style="left:805.5px;top:766.4px;width:60px;height:38px;line-height:38px;font-size:19px;color:#e8e8e8;text-align:center;font-weight:bold;">网格</div>
<div style="left:891.4px;top:760.5px;width:177.10000000000002px;height:50.200000000000045px;background:#2e3031;"></div>
<div style="left:890.9px;top:760.5px;width:1.0px;height:50.200000000000045px;background:#3c3e3f;"></div>
<div style="left:954.3px;top:760.5px;width:1.0px;height:50.200000000000045px;background:#3c3e3f;"></div>
<div style="left:981.3px;top:760.5px;width:1.0px;height:50.200000000000045px;background:#3c3e3f;"></div>
<div style="left:1042.6px;top:760.5px;width:1.0px;height:50.200000000000045px;background:#3c3e3f;"></div>
<div style="left:891.4px;top:784.7px;width:177.10000000000002px;height:1.0px;background:#3c3e3f;"></div>
<div class="t" style="left:902.1px;top:760.2px;width:40px;height:24px;line-height:24px;font-size:12px;color:#cfcfcf;text-align:center;font-weight:normal;">节拍</div>
<div class="t" style="left:902.1px;top:785.9px;width:40px;height:24px;line-height:24px;font-size:12px;color:#e6e6e6;text-align:center;font-weight:normal;">120</div>
<div class="t" style="left:991.7px;top:760.5px;width:40px;height:24px;line-height:24px;font-size:12px;color:#cfcfcf;text-align:center;font-weight:normal;">调性</div>
<div class="t" style="left:1001.7px;top:785.5px;width:20px;height:24px;line-height:24px;font-size:12px;color:#e6e6e6;text-align:center;font-weight:normal;">/</div>
<svg style="position:absolute;left:961.9px;top:770px;" width="10.0" height="6" viewBox="0 0 10.0 6"><path d="M0.5 5.5 L9.5 5.5 L5 0.8Z" fill="#c4c4c4"/></svg>
<svg style="position:absolute;left:961.9px;top:795px;" width="10.0" height="6" viewBox="0 0 10.0 6"><path d="M0.5 0.8 L9.5 0.8 L5 5.5Z" fill="#c4c4c4"/></svg>
<svg style="position:absolute;left:1050.2px;top:770px;" width="10.0" height="6" viewBox="0 0 10.0 6"><path d="M0.5 5.5 L9.5 5.5 L5 0.8Z" fill="#c4c4c4"/></svg>
<svg style="position:absolute;left:1050.2px;top:795px;" width="10.0" height="6" viewBox="0 0 10.0 6"><path d="M0.5 0.8 L9.5 0.8 L5 5.5Z" fill="#c4c4c4"/></svg>
<div style="left:1068.5px;top:760.5px;width:77.90000000000009px;height:50.200000000000045px;background:#52a8c8;"></div>
<div style="left:1146.4px;top:760.5px;width:1.099999999999909px;height:50.200000000000045px;background:#3a6c80;"></div>
<div style="left:1147.5px;top:760.5px;width:21.40000000000009px;height:50.200000000000045px;background:#52a8c8;"></div>
<svg style="position:absolute;left:1093px;top:771px;" width="30" height="29" viewBox="0 0 30 29"><g fill="none" stroke="#050505" stroke-width="2.6" stroke-linejoin="round"><path d="M9.5 2.5 L16 2.5 L23 25.5 L3 25.5Z"/><path d="M8 19 L24.5 2"/></g><rect x="3" y="21" width="20" height="5" fill="#050505"/></svg>
<svg style="position:absolute;left:1154px;top:780px;" width="8" height="7" viewBox="0 0 8 7"><path d="M0.5 0.8 L7.5 0.8 L4 5Z" fill="#1b2a30"/></svg>
<div style="left:1168.9px;top:760.5px;width:43.5px;height:50.200000000000045px;background:#2e3031;"></div>
<div class="t" style="left:1179.4px;top:760.0px;width:20px;height:24px;line-height:24px;font-size:12px;color:#dddddd;text-align:center;font-weight:normal;">4</div>
<div class="t" style="left:1179.4px;top:786.5px;width:20px;height:24px;line-height:24px;font-size:12px;color:#dddddd;text-align:center;font-weight:normal;">4</div>
<div style="left:497px;top:736px;width:154px;height:10.600000000000023px;background:#80878a;border:1px solid #2a2c2d;border-radius:4px;"></div>
<div style="left:500.5px;top:738.5px;width:1.3000000000000114px;height:5.5px;background:#1f2122;"></div>
<div style="left:644px;top:738.5px;width:1.2999999999999545px;height:5.5px;background:#1f2122;"></div>
<div style="left:664.5px;top:741.8px;width:7.5px;height:1.2000000000000455px;background:#8a9499;"></div>
<div style="left:681.5px;top:741.8px;width:8.5px;height:1.2000000000000455px;background:#8a9499;"></div>
<div style="left:685.2px;top:738px;width:1.1999999999999318px;height:8.5px;background:#8a9499;"></div>
<div style="left:701px;top:705.5px;width:7.5px;height:1.2000000000000455px;background:#8a9499;"></div>
<div style="left:700.5px;top:720.5px;width:9.0px;height:1.2999999999999545px;background:#8a9499;"></div>
<div style="left:704.4px;top:716.5px;width:1.2000000000000455px;height:9.0px;background:#8a9499;"></div>
<svg style="position:absolute;left:697px;top:734px;" width="17" height="16" viewBox="0 0 17 16"><g fill="none" stroke="#8a9499" stroke-width="1.3"><path d="M2 6 L2 2 L6 2 M2 2 L6.5 6.5"/><path d="M15 6 L15 2 L11 2 M15 2 L10.5 6.5"/><path d="M2 10 L2 14 L6 14 M2 14 L6.5 9.5"/><path d="M15 10 L15 14 L11 14 M15 14 L10.5 9.5"/></g></svg>
<div style="left:27px;top:815px;width:2px;height:2px;background:#e8e8e8;border-radius:0 0 0 2px;"></div>
<div style="left:1253px;top:815px;width:2px;height:2px;background:#e8e8e8;"></div>
<svg style="position:absolute;left:0;top:0" width="1282" height="858" viewBox="0 0 1282 858"><defs><filter id="bl" x="-5%" y="-5%" width="110%" height="110%"><feGaussianBlur stdDeviation="1.6"/></filter><filter id="hb" x="-50%" y="-50%" width="200%" height="200%"><feGaussianBlur stdDeviation="1.8"/></filter></defs><clipPath id="fr"><rect x="8" y="4" width="1266" height="849"/></clipPath><g clip-path="url(#fr)"><g stroke="#000" stroke-opacity="0.16" stroke-width="5" fill="none" filter="url(#bl)"><path d="M-1.8 636.8 L94.2 732.8"/><path d="M170.2 808.8 L221.2 859.8"/><path d="M-1.8 121.8 L102.2 225.8"/><path d="M175.2 298.8 L372.7 496.3"/><path d="M406.7 530.3 L609.2 732.8"/><path d="M685.2 808.8 L736.2 859.8"/><path d="M402.7 11.8 L616.7 225.8"/><path d="M689.7 298.8 L887.7 496.8"/><path d="M921.7 530.8 L1123.7 732.8"/><path d="M1199.7 808.8 L1250.7 859.8"/><path d="M917.7 12.3 L1132.2 226.8"/><path d="M1205.2 299.8 L1280.2 374.8"/><path d="M-1.8 387.8 L86.2 299.8"/><path d="M160.2 225.8 L374.7 11.3"/><path d="M41.2 859.8 L93.2 807.8"/><path d="M169.2 731.8 L370.7 530.3"/><path d="M404.7 496.3 L600.7 300.3"/><path d="M674.7 226.3 L889.7 11.3"/><path d="M555.7 859.8 L608.2 807.3"/><path d="M684.2 731.3 L885.7 529.8"/><path d="M919.7 495.8 L1116.2 299.3"/><path d="M1190.2 225.3 L1280.2 135.3"/><path d="M1070.2 859.8 L1122.7 807.3"/><path d="M1198.7 731.3 L1280.2 649.8"/></g></g><g stroke="#c8caca" stroke-width="1.8" stroke-dasharray="5 2.8" fill="none"><path d="M0.0 635.0 L96.0 731.0"/><path d="M172.0 807.0 L223.0 858.0"/><path d="M0.0 120.0 L104.0 224.0"/><path d="M177.0 297.0 L374.5 494.5"/><path d="M408.5 528.5 L611.0 731.0"/><path d="M687.0 807.0 L738.0 858.0"/><path d="M404.5 10.0 L618.5 224.0"/><path d="M691.5 297.0 L889.5 495.0"/><path d="M923.5 529.0 L1125.5 731.0"/><path d="M1201.5 807.0 L1252.5 858.0"/><path d="M919.5 10.5 L1134.0 225.0"/><path d="M1207.0 298.0 L1282.0 373.0"/><path d="M0.0 386.0 L88.0 298.0"/><path d="M162.0 224.0 L376.5 9.5"/><path d="M43.0 858.0 L95.0 806.0"/><path d="M171.0 730.0 L372.5 528.5"/><path d="M406.5 494.5 L602.5 298.5"/><path d="M676.5 224.5 L891.5 9.5"/><path d="M557.5 858.0 L610.0 805.5"/><path d="M686.0 729.5 L887.5 528.0"/><path d="M921.5 494.0 L1118.0 297.5"/><path d="M1192.0 223.5 L1282.0 133.5"/><path d="M1072.0 858.0 L1124.5 805.5"/><path d="M1200.5 729.5 L1282.0 648.0"/></g><rect x="388.5" y="0" width="4" height="1.2" fill="#555"/><rect x="903.5" y="0" width="4" height="1.2" fill="#555"/><g transform="translate(390.5,510.5)"><path d="M0 7.8 C-4.2 5.2 -9.3 1.8 -9.3 -2.4 C-9.3 -5.8 -7 -7.4 -4.6 -7.4 C-2.6 -7.4 -0.8 -6.2 0 -4.6 C0.8 -6.2 2.6 -7.4 4.6 -7.4 C7 -7.4 9.3 -5.8 9.3 -2.4 C9.3 1.8 4.2 5.2 0 7.8Z" fill="#000" opacity="0.3" filter="url(#hb)" transform="translate(0,1.2) scale(1.1)"/><path d="M0 7.8 C-4.2 5.2 -9.3 1.8 -9.3 -2.4 C-9.3 -5.8 -7 -7.4 -4.6 -7.4 C-2.6 -7.4 -0.8 -6.2 0 -4.6 C0.8 -6.2 2.6 -7.4 4.6 -7.4 C7 -7.4 9.3 -5.8 9.3 -2.4 C9.3 1.8 4.2 5.2 0 7.8Z" fill="#c2c2c2"/><path d="M0 7.8 C-4.2 5.2 -9.3 1.8 -9.3 -2.4 C-9.3 -5.8 -7 -7.4 -4.6 -7.4 C-2.6 -7.4 -0.8 -6.2 0 -4.6 C0.8 -6.2 2.6 -7.4 4.6 -7.4 C7 -7.4 9.3 -5.8 9.3 -2.4 C9.3 1.8 4.2 5.2 0 7.8Z" fill="#9c9c9c" transform="translate(0,0.6) scale(0.55)"/></g><g transform="translate(905.5,510.5)"><path d="M0 7.8 C-4.2 5.2 -9.3 1.8 -9.3 -2.4 C-9.3 -5.8 -7 -7.4 -4.6 -7.4 C-2.6 -7.4 -0.8 -6.2 0 -4.6 C0.8 -6.2 2.6 -7.4 4.6 -7.4 C7 -7.4 9.3 -5.8 9.3 -2.4 C9.3 1.8 4.2 5.2 0 7.8Z" fill="#000" opacity="0.3" filter="url(#hb)" transform="translate(0,1.2) scale(1.1)"/><path d="M0 7.8 C-4.2 5.2 -9.3 1.8 -9.3 -2.4 C-9.3 -5.8 -7 -7.4 -4.6 -7.4 C-2.6 -7.4 -0.8 -6.2 0 -4.6 C0.8 -6.2 2.6 -7.4 4.6 -7.4 C7 -7.4 9.3 -5.8 9.3 -2.4 C9.3 1.8 4.2 5.2 0 7.8Z" fill="#c2c2c2"/><path d="M0 7.8 C-4.2 5.2 -9.3 1.8 -9.3 -2.4 C-9.3 -5.8 -7 -7.4 -4.6 -7.4 C-2.6 -7.4 -0.8 -6.2 0 -4.6 C0.8 -6.2 2.6 -7.4 4.6 -7.4 C7 -7.4 9.3 -5.8 9.3 -2.4 C9.3 1.8 4.2 5.2 0 7.8Z" fill="#9c9c9c" transform="translate(0,0.6) scale(0.55)"/></g></svg>
<div class="t" style="left:28.6px;top:220.5px;width:200px;height:46px;line-height:46px;font-size:23px;color:#bdbac2;text-align:center;font-weight:normal;letter-spacing:2px;text-shadow:0 1px 4px rgba(0,0,0,.35);">Mac助理</div>
<div class="t" style="left:17.6px;top:254.0px;width:220px;height:40px;line-height:40px;font-size:20px;color:#bdbac2;text-align:center;font-weight:normal;text-shadow:0 1px 4px rgba(0,0,0,.35);">www.maczl.com</div>
<div class="t" style="left:550.5px;top:223.5px;width:200px;height:46px;line-height:46px;font-size:23px;color:#bdbac2;text-align:center;font-weight:normal;letter-spacing:2px;text-shadow:0 1px 4px rgba(0,0,0,.35);">Mac助理</div>
<div class="t" style="left:539.5px;top:256.0px;width:220px;height:40px;line-height:40px;font-size:20px;color:#bdbac2;text-align:center;font-weight:normal;text-shadow:0 1px 4px rgba(0,0,0,.35);">www.maczl.com</div>
<div class="t" style="left:1062.4px;top:223.2px;width:200px;height:46px;line-height:46px;font-size:23px;color:#bdbac2;text-align:center;font-weight:normal;letter-spacing:2px;text-shadow:0 1px 4px rgba(0,0,0,.35);">Mac助理</div>
<div class="t" style="left:1050.7px;top:257.4px;width:220px;height:40px;line-height:40px;font-size:20px;color:#bdbac2;text-align:center;font-weight:normal;text-shadow:0 1px 4px rgba(0,0,0,.35);">www.maczl.com</div>
<div class="t" style="left:28.6px;top:729.5px;width:200px;height:46px;line-height:46px;font-size:23px;color:#bdbac2;text-align:center;font-weight:normal;letter-spacing:2px;text-shadow:0 1px 4px rgba(0,0,0,.35);">Mac助理</div>
<div class="t" style="left:17.6px;top:764.5px;width:220px;height:40px;line-height:40px;font-size:20px;color:#bdbac2;text-align:center;font-weight:normal;text-shadow:0 1px 4px rgba(0,0,0,.35);">www.maczl.com</div>
<div class="t" style="left:550.5px;top:732.7px;width:200px;height:46px;line-height:46px;font-size:23px;color:#bdbac2;text-align:center;font-weight:normal;letter-spacing:2px;text-shadow:0 1px 4px rgba(0,0,0,.35);">Mac助理</div>
<div class="t" style="left:539.5px;top:767.0px;width:220px;height:40px;line-height:40px;font-size:20px;color:#bdbac2;text-align:center;font-weight:normal;text-shadow:0 1px 4px rgba(0,0,0,.35);">www.maczl.com</div>
<div class="t" style="left:1062.4px;top:733.5px;width:200px;height:46px;line-height:46px;font-size:23px;color:#bdbac2;text-align:center;font-weight:normal;letter-spacing:2px;text-shadow:0 1px 4px rgba(0,0,0,.35);">Mac助理</div>
<div class="t" style="left:1050.7px;top:767.0px;width:220px;height:40px;line-height:40px;font-size:20px;color:#bdbac2;text-align:center;font-weight:normal;text-shadow:0 1px 4px rgba(0,0,0,.35);">www.maczl.com</div>
<div class="t" style="left:870.5px;top:398.3px;width:60px;height:104px;line-height:104px;font-size:52px;color:#f4f4f4;text-align:left;font-weight:normal;">A</div>
<div class="t" style="left:905.5px;top:398.3px;width:60px;height:104px;line-height:104px;font-size:52px;color:#f4f4f4;text-align:left;font-weight:normal;transform:scaleX(1.2);transform-origin:0 50%;">#</div>
<div class="t" style="left:943.0px;top:435.0px;width:40px;height:70px;line-height:70px;font-size:35px;color:#f4f4f4;text-align:left;font-weight:normal;">6</div>
<div class="t" style="left:822.0px;top:645.0px;width:40px;height:66px;line-height:66px;font-size:33px;color:#f4f4f4;text-align:left;font-weight:normal;">C</div>
<div class="t" style="left:846.0px;top:663.5px;width:40px;height:60px;line-height:60px;font-size:30px;color:#f4f4f4;text-align:left;font-weight:normal;">6</div></body></html>
